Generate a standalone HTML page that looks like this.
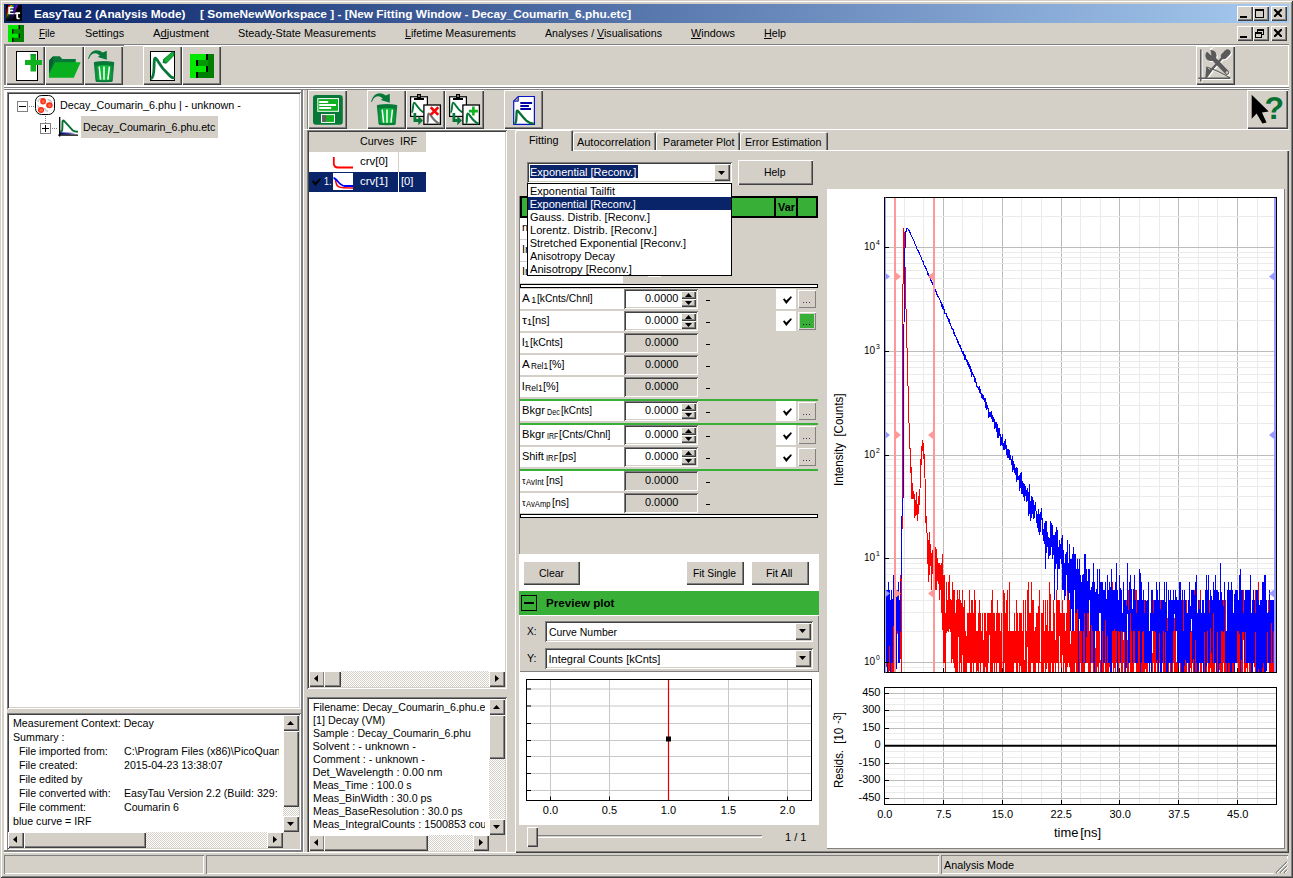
<!DOCTYPE html><html><head><meta charset="utf-8"><title>EasyTau 2</title><style>
*{box-sizing:border-box;margin:0;padding:0}
html,body{width:1293px;height:878px;overflow:hidden;background:#d4d0c8}
body{position:relative;font-family:"Liberation Sans",sans-serif;font-size:12px;color:#000}
div,span.t,svg{position:absolute}
span.t{white-space:pre;transform-origin:0 0;display:block}
.raised{background:#d4d0c8;box-shadow:inset 1px 1px 0 #fff,inset -1px -1px 0 #404040,inset -2px -2px 0 #808080}
.raised1{background:#d4d0c8;box-shadow:inset 1px 1px 0 #fff,inset -1px -1px 0 #808080}
.btn{background:#d4d0c8;box-shadow:inset 1px 1px 0 #fff,inset -1px -1px 0 #404040,inset -2px -2px 0 #808080,inset 2px 2px 0 #d4d0c8}
.sunken{background:#fff;box-shadow:inset 1px 1px 0 #808080,inset -1px -1px 0 #fff,inset 2px 2px 0 #404040,inset -2px -2px 0 #d4d0c8}
.sunken1{box-shadow:inset 1px 1px 0 #808080,inset -1px -1px 0 #fff}
.dither{background-image:conic-gradient(#fff 25%,#d4d0c8 0 50%,#fff 0 75%,#d4d0c8 0);background-size:2px 2px}
u{text-decoration:underline;text-underline-offset:1px;text-decoration-thickness:1px}
</style></head><body>
<div class="" style="left:0px;top:0px;width:1293px;height:878px;box-shadow:inset 1px 1px 0 #d4d0c8,inset -1px -1px 0 #404040,inset 2px 2px 0 #fff,inset -2px -2px 0 #808080;"></div>
<div class="" style="left:4px;top:4px;width:1285px;height:19px;background:linear-gradient(90deg,#0a246a 0%,#a6caf0 100%);"></div>
<svg style="left:6px;top:5px" width="16" height="16" viewBox="0 0 16 16"><defs><linearGradient id="tf" x1="0" y1="0" x2="0" y2="1"><stop offset="0" stop-color="#000" stop-opacity="0"/><stop offset=".55" stop-color="#000" stop-opacity=".35"/><stop offset="1" stop-color="#000" stop-opacity="1"/></linearGradient></defs><rect width="16" height="16" fill="#000"/><g transform="skewX(-22)"><rect x="2.500" y="0" width="2" height="16" fill="#c80000"/><rect x="4.500" y="0" width="1.800" height="16" fill="#c8b000"/><rect x="6.300" y="0" width="1.800" height="16" fill="#10a010"/><rect x="8.100" y="0" width="1.800" height="16" fill="#1020d0"/><rect x="9.900" y="0" width="2.200" height="16" fill="#7010c0"/></g><rect width="16" height="16" fill="url(#tf)"/><path d="M2.300 1.800h5.300v1.400H4v1.600h3.200v1.400H4v1.700h3.700v1.400H2.300z" fill="#fff"/><path d="M8.300 8.800C9 7.400 10 7.300 11 7.300h3.100v1.600h-2v3.400c0 .6.500.7 1.600.5v1.400c-2.300.5-3.400-.1-3.400-1.700V8.900c-.7 0-1.100.2-1.400.7z" fill="#fff"/></svg>
<span class="t" style="left:34.3px;top:8px;font-size:11.5px;line-height:13px;color:#fff;font-weight:bold;transform:scaleX(1.0281);">EasyTau 2 (Analysis Mode)</span>
<span class="t" style="left:200.3px;top:8px;font-size:11.5px;line-height:13px;color:#fff;font-weight:bold;transform:scaleX(1.0308);">[ SomeNewWorkspace ] - [New Fitting Window - Decay_Coumarin_6.phu.etc]</span>
<div class="raised" style="left:1237px;top:6px;width:16px;height:15px;"></div>
<div class="" style="left:1240px;top:16px;width:7px;height:2px;background:#000"></div>
<div class="raised" style="left:1253px;top:6px;width:16px;height:15px;"></div>
<div class="" style="left:1255px;top:9px;width:9px;height:9px;border:1px solid #000;border-top:2px solid #000"></div>
<div class="raised" style="left:1271px;top:6px;width:16px;height:15px;"></div>
<svg style="left:1274px;top:9px" width="8" height="8" viewBox="0 0 8 8"><path d="M.8.8L7.200 7.200M7.200.8L.8 7.200" stroke="#000" stroke-width="2" stroke-linecap="square"/></svg>
<div class="raised" style="left:1237px;top:26px;width:16px;height:15px;"></div>
<div class="" style="left:1240px;top:36px;width:7px;height:2px;background:#000"></div>
<div class="raised" style="left:1253px;top:26px;width:16px;height:15px;"></div>
<div class="" style="left:1257px;top:29px;width:7px;height:6px;border:1px solid #000;border-top:2px solid #000"></div>
<div class="" style="left:1255px;top:32px;width:7px;height:6px;border:1px solid #000;border-top:2px solid #000;background:#d4d0c8"></div>
<div class="raised" style="left:1271px;top:26px;width:16px;height:15px;"></div>
<svg style="left:1274px;top:29px" width="8" height="8" viewBox="0 0 8 8"><path d="M.8.8L7.200 7.200M7.200.8L.8 7.200" stroke="#000" stroke-width="2" stroke-linecap="square"/></svg>
<svg style="left:8px;top:25px" width="16" height="17" viewBox="0 0 16 17"><rect x="0.00" y="0.00" width="16.00" height="17.00" fill="#008000"/><rect x="0.00" y="0.00" width="4.00" height="17.00" fill="#00e800"/><rect x="4.00" y="0.00" width="6.67" height="4.25" fill="#00e800"/><rect x="4.00" y="8.50" width="6.67" height="4.25" fill="#00e800"/><rect x="5.33" y="4.25" width="6.67" height="4.25" fill="#009800"/><rect x="10.67" y="0.00" width="1.33" height="4.25" fill="#000"/><rect x="4.00" y="4.25" width="1.33" height="4.25" fill="#000"/><rect x="10.67" y="8.50" width="1.33" height="4.25" fill="#000"/><rect x="4.00" y="12.75" width="1.33" height="4.25" fill="#000"/></svg>
<span class="t" style="left:38.5px;top:27px;font-size:11px;line-height:13px;color:#000;transform:scaleX(0.9030);"><u>F</u>ile</span>
<span class="t" style="left:84.5px;top:27px;font-size:11px;line-height:13px;color:#000;transform:scaleX(0.9854);">Settin<u>g</u>s</span>
<span class="t" style="left:153px;top:27px;font-size:11px;line-height:13px;color:#000;transform:scaleX(1.0170);">A<u>d</u>justment</span>
<span class="t" style="left:238px;top:27px;font-size:11px;line-height:13px;color:#000;transform:scaleX(0.9892);">Stead<u>y</u>-State Measurements</span>
<span class="t" style="left:405px;top:27px;font-size:11px;line-height:13px;color:#000;transform:scaleX(0.9705);"><u>L</u>ifetime Measurements</span>
<span class="t" style="left:545px;top:27px;font-size:11px;line-height:13px;color:#000;transform:scaleX(0.9676);">Analyses / <u>V</u>isualisations</span>
<span class="t" style="left:691px;top:27px;font-size:11px;line-height:13px;color:#000;transform:scaleX(0.9860);"><u>W</u>indows</span>
<span class="t" style="left:764px;top:27px;font-size:11px;line-height:13px;color:#000;transform:scaleX(0.9724);"><u>H</u>elp</span>
<div class="" style="left:4px;top:44px;width:1285px;height:1px;background:#808080"></div>
<div class="" style="left:4px;top:45px;width:1285px;height:1px;background:#fff"></div>
<div class="" style="left:4px;top:45px;width:120px;height:1px;background:#808080"></div>
<div class="" style="left:4px;top:44px;width:1px;height:42px;background:#808080"></div>
<div class="" style="left:5px;top:45px;width:1px;height:40px;background:#808080"></div>
<div class="" style="left:4px;top:85px;width:1285px;height:2px;background:#fff"></div>
<div class="" style="left:4px;top:87px;width:1285px;height:1px;background:#808080"></div>
<div class="" style="left:4px;top:88px;width:1285px;height:1px;background:#fff"></div>
<div class="" style="left:4px;top:89px;width:1285px;height:1px;background:#808080"></div>
<div class="" style="left:1288px;top:45px;width:1px;height:42px;background:#fff"></div>
<div class="btn" style="left:6px;top:46px;width:39px;height:39px;"></div>
<div class="btn" style="left:45px;top:46px;width:39px;height:39px;"></div>
<div class="btn" style="left:84px;top:46px;width:39px;height:39px;"></div>
<div class="btn" style="left:143px;top:46px;width:39px;height:39px;"></div>
<div class="btn" style="left:182px;top:46px;width:39px;height:39px;"></div>
<div class="btn" style="left:1196px;top:46px;width:39px;height:39px;"></div>
<svg style="left:6px;top:46px" width="39" height="39" viewBox="0 0 39 39"><rect x="10.5" y="5.5" width="21" height="29" fill="#fff" stroke="#000"/><path d="M24.5 8h5.5v6h6v5h-6v6.500h-5.500v-6.500h-5.500v-5h5.500z" fill="#10b020"/><path d="M24.500 8h5.500v1.500h-5.500z" fill="#078030" opacity=".6"/></svg>
<svg style="left:45px;top:46px" width="39" height="39" viewBox="0 0 39 39"><path d="M4 14.400L8.200 10.300H14.800L17.300 13H30.800V17H10.500L4 29z" fill="#087838"/><path d="M4 14.400L8.200 10.300 8.200 16 4 28z" fill="#066030"/><path d="M10 16.200H35.700L28.800 31.800H4V28z" fill="#08b020"/></svg>
<svg style="left:84px;top:46px" width="39" height="39" viewBox="0 0 39 39"><g transform="translate(0,0)"><defs><linearGradient id="tg00" x1="0" y1="0" x2="1" y2="0"><stop offset="0" stop-color="#087838"/><stop offset=".3" stop-color="#10b838"/><stop offset=".7" stop-color="#10b838"/><stop offset="1" stop-color="#087838"/></linearGradient></defs><path d="M10.300 16.500Q20 14.800 29.800 16.500L28.200 35.300Q20 36.300 12 35.300z" fill="url(#tg00)" stroke="#087838" stroke-width=".8"/><path d="M10.300 16Q20 14.500 29.800 16L29.500 19.800Q20 18.300 10.700 19.800z" fill="#087838"/><path d="M12.200 33.800Q20 34.800 28 33.800L27.900 35.500Q20 36.500 12.200 35.500z" fill="#087838"/><path d="M15.200 20.600l1.400 13M20 20.400v13.400M25.400 20.600l-1.500 13" stroke="#fff" stroke-width="1.500" fill="none"/><path d="M4 12.500Q6.500 4.500 12 4.200Q16 4.200 18.800 6.600L22.800 4.700V13.700L13.800 11L15.800 9.600Q12.500 6.500 9.500 7.500Q6.500 8.500 4.900 12.900z" fill="#087838"/></g></svg>
<svg style="left:143px;top:46px" width="39" height="39" viewBox="0 0 39 39"><rect x="7.500" y="5.500" width="24" height="29" fill="#fff" stroke="#000"/><path d="M8.500 32.300C10.500 31 10.800 27 11 22C11.200 13 11.500 12 12.500 12.200C13.500 12.400 17 19 20 22.600L27 30C28.500 31.500 29.500 31.900 30.500 31.900" stroke="#087838" stroke-width="2.800" fill="none" stroke-linecap="round"/><path d="M20 16.600L20.800 13.200 29.300 6H31V9.300L23.300 17.200z" fill="#10b030" stroke="#087838" stroke-width=".9"/><path d="M20 16.600L20.800 13.200 23.300 17.200z" fill="#087838"/></svg>
<svg style="left:182px;top:46px" width="39" height="39" viewBox="0 0 39 39"><rect x="8.00" y="8.00" width="24.00" height="24.00" fill="#008000"/><rect x="8.00" y="8.00" width="6.00" height="24.00" fill="#00e800"/><rect x="14.00" y="8.00" width="10.00" height="6.00" fill="#00e800"/><rect x="14.00" y="20.00" width="10.00" height="6.00" fill="#00e800"/><rect x="16.00" y="14.00" width="10.00" height="6.00" fill="#009800"/><rect x="24.00" y="8.00" width="2.00" height="6.00" fill="#000"/><rect x="14.00" y="14.00" width="2.00" height="6.00" fill="#000"/><rect x="24.00" y="20.00" width="2.00" height="6.00" fill="#000"/><rect x="14.00" y="26.00" width="2.00" height="6.00" fill="#000"/></svg>
<svg style="left:1196px;top:46px" width="39" height="39" viewBox="0 0 39 39"><g transform="translate(1,1)"><path d="M4.800 3.500v32M2.400 32.300h32" stroke="#fff" stroke-width="1.500" fill="none"/><path d="M9.300 32L10.300 21l5.500 4.300L11 32z" fill="#fff"/><path d="M10.300 21Q22 24.500 34 32" stroke="#fff" stroke-width="1.200" fill="none"/><path d="M31.500 6.500L28 10" stroke="#fff" stroke-width="6.200" stroke-linecap="round"/><path d="M28 10L12.500 27" stroke="#fff" stroke-width="2.300"/><path d="M16 11L31 26.500" stroke="#fff" stroke-width="4.600" stroke-linecap="round"/><circle cx="15" cy="9.500" r="5.600" fill="#fff"/><path d="M8 2.500L15.500 9.500 12.500 2z" fill="#fff"/><path d="M9 1l6.500 6.500L13.800 3 17 .5z" fill="#fff"/><path d="M15.500 9.800L8.500 3.200 13 1.500z" fill="#fff"/><circle cx="31" cy="26.500" r="1.300" fill="#fff"/></g><path d="M4.800 3.500v32M2.400 32.300h32" stroke="#5a5a5a" stroke-width="1.500" fill="none"/><path d="M9.300 32L10.300 21l5.500 4.300L11 32z" fill="#5a5a5a"/><path d="M10.300 21Q22 24.500 34 32" stroke="#5a5a5a" stroke-width="1.200" fill="none"/><path d="M31.500 6.500L28 10" stroke="#5a5a5a" stroke-width="6.200" stroke-linecap="round"/><path d="M28 10L12.500 27" stroke="#5a5a5a" stroke-width="2.300"/><path d="M16 11L31 26.500" stroke="#5a5a5a" stroke-width="4.600" stroke-linecap="round"/><circle cx="15" cy="9.500" r="5.600" fill="#5a5a5a"/><path d="M8 2.500L15.500 9.500 12.500 2z" fill="#d4d0c8"/><path d="M9 1l6.500 6.500L13.800 3 17 .5z" fill="#d4d0c8"/><path d="M15.500 9.800L8.500 3.200 13 1.500z" fill="#d4d0c8"/><circle cx="31" cy="26.500" r="1.300" fill="#d4d0c8"/></svg>
<div class="" style="left:4px;top:90px;width:299px;height:2px;background:#fff"></div>
<div class="" style="left:4px;top:90px;width:3px;height:760px;background:#fff"></div>
<div class="sunken" style="left:7px;top:92px;width:294px;height:617px;"></div>
<div class="" style="left:29px;top:106px;width:1px;height:1px;background:#808080"></div>
<div class="" style="left:31px;top:106px;width:1px;height:1px;background:#808080"></div>
<div class="" style="left:33px;top:106px;width:1px;height:1px;background:#808080"></div>
<div class="" style="left:45px;top:116px;width:1px;height:1px;background:#808080"></div>
<div class="" style="left:45px;top:118px;width:1px;height:1px;background:#808080"></div>
<div class="" style="left:45px;top:120px;width:1px;height:1px;background:#808080"></div>
<div class="" style="left:45px;top:122px;width:1px;height:1px;background:#808080"></div>
<div class="" style="left:52px;top:128px;width:1px;height:1px;background:#808080"></div>
<div class="" style="left:54px;top:128px;width:1px;height:1px;background:#808080"></div>
<div class="" style="left:56px;top:128px;width:1px;height:1px;background:#808080"></div>
<div class="" style="left:17px;top:101px;width:11px;height:11px;border:1px solid #808080;background:#fff"></div>
<div class="" style="left:19px;top:106px;width:7px;height:1px;background:#000"></div>
<div class="" style="left:40px;top:123px;width:11px;height:11px;border:1px solid #808080;background:#fff"></div>
<div class="" style="left:42px;top:128px;width:7px;height:1px;background:#000"></div>
<div class="" style="left:45px;top:125px;width:1px;height:7px;background:#000"></div>
<svg style="left:35px;top:95px" width="20" height="20" viewBox="0 0 20 20"><rect x=".5" y=".5" width="19" height="19" rx="6" fill="#fff" stroke="#000"/><path d="M3 7Q3.500 3.500 7 3.200M12.500 4.500Q16 5 16.500 8M2.800 10.500Q3 12 4.500 12.500M9.500 13Q10.500 16 13 16.500" stroke="#c8c8c8" stroke-width="1.600" fill="none"/><ellipse cx="8.100" cy="6.300" rx="2.900" ry="3.200" fill="#f83018"/><ellipse cx="14.400" cy="10.300" rx="3.300" ry="3" fill="#f83018"/><ellipse cx="6" cy="15" rx="3.100" ry="2.900" fill="#f83018"/><ellipse cx="8.300" cy="6.600" rx="1.500" ry="1.700" fill="#ff6848"/><ellipse cx="14.600" cy="10.500" rx="1.700" ry="1.500" fill="#ff6848"/><ellipse cx="6.200" cy="15.200" rx="1.600" ry="1.400" fill="#ff6848"/></svg>
<span class="t" style="left:60px;top:99px;font-size:11px;line-height:13px;color:#000;transform:scaleX(0.9775);">Decay_Coumarin_6.phu | - unknown -</span>
<div class="" style="left:173px;top:98px;width:1px;height:13px;background:#e08000;opacity:0"></div>
<svg style="left:58px;top:116px" width="21" height="21" viewBox="0 0 21 21"><defs><linearGradient id="cg" x1="0" y1="0" x2="1" y2="0"><stop offset="0" stop-color="#000080"/><stop offset=".5" stop-color="#4040a0"/><stop offset="1" stop-color="#fff"/></linearGradient></defs><path d="M2 18.700V16.200L15 16.800 19.500 18.700z" fill="url(#cg)"/><path d="M2.300 15.800C4.500 15.600 4.300 15 4.500 6C4.600 4 5.500 4.200 6.500 5.300L14.500 14.200C16 15.600 17.500 15.700 20 15.700" stroke="#087030" stroke-width="1.900" fill="none"/><path d="M1.700 1v19.500M.2 19.200h19.800" stroke="#000" stroke-width="1.300" fill="none"/></svg>
<div class="" style="left:81px;top:116px;width:137px;height:22px;background:#d4d0c8"></div>
<span class="t" style="left:82.9px;top:121px;font-size:11px;line-height:13px;color:#000;transform:scaleX(0.9711);">Decay_Coumarin_6.phu.etc</span>
<div class="" style="left:7px;top:709px;width:294px;height:4px;background:#d4d0c8"></div>
<div class="sunken" style="left:7px;top:713px;width:294px;height:137px;"></div>
<div class="" style="left:4px;top:850px;width:299px;height:2px;background:#808080"></div>
<div class="" style="left:8px;top:715px;width:275px;height:117px;overflow:hidden"></div>
<span class="t" style="left:12.9px;top:716.5px;font-size:11px;line-height:13px;color:#000;transform:scaleX(0.9680);">Measurement Context: Decay</span>
<span class="t" style="left:12.9px;top:730.5px;font-size:11px;line-height:13px;color:#000;transform:scaleX(0.9680);">Summary :</span>
<span class="t" style="left:18.599999999999998px;top:744.5px;font-size:11px;line-height:13px;color:#000;transform:scaleX(0.9680);">File imported from:</span>
<span class="t" style="left:124.2px;top:744.5px;font-size:11px;line-height:13px;color:#000;transform:scaleX(0.9660);">C:\Program Files (x86)\PicoQuan</span>
<span class="t" style="left:18.599999999999998px;top:758.5px;font-size:11px;line-height:13px;color:#000;transform:scaleX(0.9680);">File created:</span>
<span class="t" style="left:124.2px;top:758.5px;font-size:11px;line-height:13px;color:#000;transform:scaleX(0.9660);">2015-04-23 13:38:07</span>
<span class="t" style="left:18.599999999999998px;top:772.5px;font-size:11px;line-height:13px;color:#000;transform:scaleX(0.9680);">File edited by</span>
<span class="t" style="left:18.599999999999998px;top:786.5px;font-size:11px;line-height:13px;color:#000;transform:scaleX(0.9680);">File converted with:</span>
<span class="t" style="left:124.2px;top:786.5px;font-size:11px;line-height:13px;color:#000;transform:scaleX(0.9660);">EasyTau Version 2.2 (Build: 329:</span>
<span class="t" style="left:18.599999999999998px;top:800.5px;font-size:11px;line-height:13px;color:#000;transform:scaleX(0.9680);">File comment:</span>
<span class="t" style="left:124.2px;top:800.5px;font-size:11px;line-height:13px;color:#000;transform:scaleX(0.9660);">Coumarin 6</span>
<span class="t" style="left:12.9px;top:814.5px;font-size:11px;line-height:13px;color:#000;transform:scaleX(0.9680);">blue curve = IRF</span>
<div class="" style="left:279px;top:715px;width:4px;height:117px;background:#fff"></div>
<div class="dither" style="left:283px;top:715px;width:16px;height:117px;"></div>
<div class="raised" style="left:283px;top:715px;width:16px;height:16px;"></div>
<svg style="left:287px;top:721px" width="7" height="4" viewBox="0 0 7 4"><path d="M0 4h7L3.500 0z" fill="#000"/></svg>
<div class="raised" style="left:283px;top:816px;width:16px;height:16px;"></div>
<svg style="left:287px;top:822px" width="7" height="4" viewBox="0 0 7 4"><path d="M0 0h7L3.500 4z" fill="#000"/></svg>
<div class="raised" style="left:283px;top:731px;width:16px;height:76px;"></div>
<div class="dither" style="left:8px;top:832px;width:275px;height:16px;"></div>
<div class="raised" style="left:8px;top:832px;width:16px;height:16px;"></div>
<svg style="left:13px;top:836px" width="4" height="7" viewBox="0 0 4 7"><path d="M4 0v7L0 3.500z" fill="#000"/></svg>
<div class="raised" style="left:267px;top:832px;width:16px;height:16px;"></div>
<svg style="left:273px;top:836px" width="4" height="7" viewBox="0 0 4 7"><path d="M0 0v7l4-3.500z" fill="#000"/></svg>
<div class="raised" style="left:24px;top:832px;width:122px;height:16px;"></div>
<div class="" style="left:283px;top:832px;width:16px;height:16px;background:#d4d0c8"></div>
<div class="" style="left:301px;top:90px;width:2px;height:762px;background:#808080"></div>
<div class="" style="left:303px;top:90px;width:1px;height:762px;background:#fff"></div>
<div class="" style="left:307px;top:90px;width:1px;height:39px;background:#808080"></div>
<div class="" style="left:303px;top:129px;width:986px;height:1px;background:#fff"></div>
<div class="btn" style="left:308px;top:90px;width:39px;height:39px;"></div>
<div class="btn" style="left:367px;top:90px;width:39px;height:39px;"></div>
<div class="btn" style="left:406px;top:90px;width:39px;height:39px;"></div>
<div class="btn" style="left:445px;top:90px;width:39px;height:39px;"></div>
<div class="btn" style="left:504px;top:90px;width:39px;height:39px;"></div>
<svg style="left:308px;top:90px" width="39" height="39" viewBox="0 0 39 39"><rect x="5" y="5" width="29.800" height="29.800" rx="3" fill="#087838"/><rect x="9.800" y="8.600" width="20.700" height="12.700" fill="#10b020" stroke="#fff" stroke-width="1"/><path d="M11.200 12h9M11.200 15h16.800M11.200 18h12" stroke="#fff" stroke-width="1.900"/><rect x="13.500" y="24.600" width="13" height="7.800" fill="#10b020" stroke="#fff" stroke-width="1"/><rect x="14" y="25.100" width="4" height="6.800" fill="#606060"/></svg>
<svg style="left:367px;top:90px" width="39" height="39" viewBox="0 0 39 39"><g transform="translate(0,-1)"><defs><linearGradient id="tg0-1" x1="0" y1="0" x2="1" y2="0"><stop offset="0" stop-color="#087838"/><stop offset=".3" stop-color="#10b838"/><stop offset=".7" stop-color="#10b838"/><stop offset="1" stop-color="#087838"/></linearGradient></defs><path d="M10.300 16.500Q20 14.800 29.800 16.500L28.200 35.300Q20 36.300 12 35.300z" fill="url(#tg0-1)" stroke="#087838" stroke-width=".8"/><path d="M10.300 16Q20 14.500 29.800 16L29.500 19.800Q20 18.300 10.700 19.800z" fill="#087838"/><path d="M12.200 33.800Q20 34.800 28 33.800L27.900 35.500Q20 36.500 12.200 35.500z" fill="#087838"/><path d="M15.200 20.600l1.400 13M20 20.400v13.400M25.400 20.600l-1.500 13" stroke="#fff" stroke-width="1.500" fill="none"/><path d="M4 12.500Q6.500 4.500 12 4.200Q16 4.200 18.800 6.600L22.800 4.700V13.700L13.800 11L15.800 9.600Q12.500 6.500 9.500 7.500Q6.500 8.500 4.900 12.900z" fill="#087838"/></g></svg>
<svg style="left:406px;top:90px" width="39" height="39" viewBox="0 0 39 39"><rect x="4.600" y="6.800" width="16.800" height="19.600" fill="#fff" stroke="#000" stroke-width="1.200"/><rect x="8" y="8" width="10" height="2" fill="#000"/><rect x="11" y="4" width="4" height="4" fill="#000"/><rect x="12.300" y="5.200" width="1.400" height="1.600" fill="#d4d0c8"/><path d="M5.500 22.500C7.500 22 6.500 12.800 8.300 12.800C9.800 12.800 12 19.500 17.500 22.500" stroke="#087838" stroke-width="1.900" fill="none"/><path d="M7.500 23h2.700v6h2.100v-3l4.700 4.600-4.700 4.600v-3.200H7.500z" fill="#087838"/><rect x="17.900" y="15" width="16.500" height="19.300" fill="#fff" stroke="#000" stroke-width="1.300"/><path d="M20.800 33.300C22.800 33 21 23.500 22.800 23.500C24.500 23.500 27 31 33.500 33.700" stroke="#707070" stroke-width="2.200" fill="none"/><path d="M24.700 17.300l7.600 7.600M32.300 17.300l-7.600 7.600" stroke="#f80808" stroke-width="2.700"/></svg>
<svg style="left:445px;top:90px" width="39" height="39" viewBox="0 0 39 39"><rect x="4.600" y="6.800" width="16.800" height="19.600" fill="#fff" stroke="#000" stroke-width="1.200"/><rect x="8" y="8" width="10" height="2" fill="#000"/><rect x="11" y="4" width="4" height="4" fill="#000"/><rect x="12.300" y="5.200" width="1.400" height="1.600" fill="#d4d0c8"/><path d="M5.500 22.500C7.500 22 6.500 12.800 8.300 12.800C9.800 12.800 12 19.500 17.500 22.500" stroke="#087838" stroke-width="1.900" fill="none"/><path d="M7.500 23h2.700v6h2.100v-3l4.700 4.600-4.700 4.600v-3.200H7.500z" fill="#087838"/><rect x="17.900" y="15" width="16.500" height="19.300" fill="#fff" stroke="#000" stroke-width="1.300"/><path d="M20.800 33.300C22.800 33 21 23.500 22.800 23.500C24.500 23.500 27 31 33.500 33.700" stroke="#087838" stroke-width="2.200" fill="none"/><path d="M28.400 16.600v9M23.900 21.100h9" stroke="#10b020" stroke-width="2.600"/></svg>
<svg style="left:504px;top:90px" width="39" height="39" viewBox="0 0 39 39"><path d="M9.700 11.200L14.300 6.500H30.400V34.300H9.700z" fill="#fff" stroke="#0818c0" stroke-width="1.200"/><path d="M9.700 11.200h4.600V6.500z" fill="#b0a898" stroke="#0818c0" stroke-width="1"/><path d="M16.300 13h11.800M16.300 16h8.600M16.300 19.100h10.700" stroke="#0000a8" stroke-width="2"/><path d="M10.500 33.600C12.300 33.200 12.300 30 12.500 25C12.600 21 12.800 20.500 13.400 20.700C14.500 21 18 26.500 22.300 30.600C25 33 27.500 33.600 29.800 33.600" stroke="#087030" stroke-width="2.300" fill="none"/></svg>
<div class="btn" style="left:1247px;top:90px;width:41px;height:39px;"></div>
<svg style="left:1247px;top:90px" width="41" height="39" viewBox="0 0 41 39"><path d="M4.700 4.700V28.800L9.600 23.600 15.400 33.500 19.600 32.500 14.900 22.500 21.700 21.500z" fill="#000"/><text x="17.500" y="29.300" font-family="Liberation Sans" font-weight="bold" font-size="32" fill="#087030">?</text></svg>
<div class="sunken" style="left:307px;top:130px;width:200px;height:559px;"></div>
<div class="" style="left:309px;top:132px;width:117px;height:20px;background:#d4d0c8"></div>
<span class="t" style="left:359.5px;top:135px;font-size:11px;line-height:13px;color:#000;transform:scaleX(0.9758);">Curves</span>
<span class="t" style="left:399.5px;top:135px;font-size:11px;line-height:13px;color:#000;transform:scaleX(0.9594);">IRF</span>
<div class="" style="left:398px;top:152px;width:1px;height:40px;background:#d4d0c8"></div>
<svg style="left:332px;top:156px" width="22" height="14" viewBox="0 0 22 14"><path d="M1.800 1V8Q2.300 11.500 6 11.500H21" stroke="#f00" stroke-width="1.800" fill="none"/></svg>
<span class="t" style="left:359.5px;top:155px;font-size:11px;line-height:13px;color:#000;transform:scaleX(1.0407);">crv[0]</span>
<div class="" style="left:309px;top:172px;width:117px;height:20px;background:#0a246a"></div>
<div class="" style="left:398px;top:172px;width:1px;height:20px;background:#fff"></div>
<svg style="left:312px;top:178px" width="9" height="8" viewBox="0 0 9 8"><path d="M0 3.500l1.300-1.300 2 2.300L8 0l.8 1.500L3.300 8z" fill="#000"/></svg>
<span class="t" style="left:324px;top:175px;font-size:11px;line-height:13px;color:#fff;transform:scaleX(0.8163);">1.</span>
<div class="" style="left:333px;top:173px;width:20px;height:17px;background:#fff"></div>
<svg style="left:333px;top:173px" width="20" height="17" viewBox="0 0 20 17"><path d="M2.500 6C3 15 5 15 20 15" stroke="#f00" stroke-width="1.600" fill="none"/><path d="M.5 5C4 5 6 13 12 13H20" stroke="#00f" stroke-width="1.800" fill="none"/></svg>
<span class="t" style="left:359.5px;top:175px;font-size:11px;line-height:13px;color:#fff;transform:scaleX(1.0407);">crv[1]</span>
<span class="t" style="left:400.5px;top:175px;font-size:11px;line-height:13px;color:#fff;transform:scaleX(1.0204);">[0]</span>
<div class="dither" style="left:309px;top:671px;width:196px;height:16px;"></div>
<div class="raised" style="left:309px;top:671px;width:16px;height:16px;"></div>
<svg style="left:314px;top:675px" width="4" height="7" viewBox="0 0 4 7"><path d="M4 0v7L0 3.500z" fill="#000"/></svg>
<div class="raised" style="left:489px;top:671px;width:16px;height:16px;"></div>
<svg style="left:495px;top:675px" width="4" height="7" viewBox="0 0 4 7"><path d="M0 0v7l4-3.500z" fill="#000"/></svg>
<div class="raised" style="left:324px;top:671px;width:17px;height:16px;"></div>
<div class="sunken" style="left:307px;top:697px;width:200px;height:156px;"></div>
<div style="left:309px;top:699px;width:176px;height:136px;overflow:hidden">
<span class="t" style="left:3.5px;top:1.6999999999999993px;font-size:11px;line-height:13px;color:#000;transform:scaleX(0.9617);">Filename: Decay_Coumarin_6.phu.etc</span>
<span class="t" style="left:3.5px;top:14.7px;font-size:11px;line-height:13px;color:#000;transform:scaleX(0.9813);">[1] Decay (VM)</span>
<span class="t" style="left:3.5px;top:27.700000000000003px;font-size:11px;line-height:13px;color:#000;transform:scaleX(0.9565);">Sample : Decay_Coumarin_6.phu</span>
<span class="t" style="left:3.5px;top:40.7px;font-size:11px;line-height:13px;color:#000;">Solvent : - unknown -</span>
<span class="t" style="left:3.5px;top:53.7px;font-size:11px;line-height:13px;color:#000;transform:scaleX(0.9792);">Comment : - unknown -</span>
<span class="t" style="left:3.5px;top:66.7px;font-size:11px;line-height:13px;color:#000;">Det_Wavelength : 0.00 nm</span>
<span class="t" style="left:3.5px;top:79.7px;font-size:11px;line-height:13px;color:#000;transform:scaleX(0.9631);">Meas_Time : 100.0 s</span>
<span class="t" style="left:3.5px;top:92.7px;font-size:11px;line-height:13px;color:#000;transform:scaleX(0.9724);">Meas_BinWidth : 30.0 ps</span>
<span class="t" style="left:3.5px;top:105.7px;font-size:11px;line-height:13px;color:#000;transform:scaleX(0.9624);">Meas_BaseResolution : 30.0 ps</span>
<span class="t" style="left:3.5px;top:118.69999999999999px;font-size:11px;line-height:13px;color:#000;transform:scaleX(0.9774);">Meas_IntegralCounts : 1500853 counts</span>
</div>
<div class="dither" style="left:489px;top:699px;width:16px;height:136px;"></div>
<div class="raised" style="left:489px;top:699px;width:16px;height:16px;"></div>
<svg style="left:493px;top:705px" width="7" height="4" viewBox="0 0 7 4"><path d="M0 4h7L3.500 0z" fill="#000"/></svg>
<div class="raised" style="left:489px;top:819px;width:16px;height:16px;"></div>
<svg style="left:493px;top:825px" width="7" height="4" viewBox="0 0 7 4"><path d="M0 0h7L3.500 4z" fill="#000"/></svg>
<div class="raised" style="left:489px;top:715px;width:16px;height:44px;"></div>
<div class="dither" style="left:309px;top:835px;width:180px;height:16px;"></div>
<div class="raised" style="left:309px;top:835px;width:16px;height:16px;"></div>
<svg style="left:314px;top:839px" width="4" height="7" viewBox="0 0 4 7"><path d="M4 0v7L0 3.500z" fill="#000"/></svg>
<div class="raised" style="left:473px;top:835px;width:16px;height:16px;"></div>
<svg style="left:479px;top:839px" width="4" height="7" viewBox="0 0 4 7"><path d="M0 0v7l4-3.500z" fill="#000"/></svg>
<div class="raised" style="left:324px;top:835px;width:104px;height:16px;"></div>
<div class="" style="left:489px;top:835px;width:16px;height:16px;background:#d4d0c8"></div>
<div class="" style="left:515px;top:150px;width:774px;height:703px;box-shadow:inset 1px 1px 0 #fff,inset -1px -1px 0 #404040,inset -2px -2px 0 #808080;"></div>
<div class="" style="left:573px;top:132px;width:83px;height:18px;background:#d4d0c8;box-shadow:inset 1px 1px 0 #fff,inset -1px 0 0 #404040,inset -2px 0 0 #808080;border-radius:2px 2px 0 0"></div>
<span class="t" style="left:577px;top:136px;font-size:11px;line-height:13px;color:#000;transform:scaleX(0.9928);">Autocorrelation</span>
<div class="" style="left:656px;top:132px;width:84px;height:18px;background:#d4d0c8;box-shadow:inset 1px 1px 0 #fff,inset -1px 0 0 #404040,inset -2px 0 0 #808080;border-radius:2px 2px 0 0"></div>
<span class="t" style="left:662.5px;top:136px;font-size:11px;line-height:13px;color:#000;transform:scaleX(0.9740);">Parameter Plot</span>
<div class="" style="left:740px;top:132px;width:88px;height:18px;background:#d4d0c8;box-shadow:inset 1px 1px 0 #fff,inset -1px 0 0 #404040,inset -2px 0 0 #808080;border-radius:2px 2px 0 0"></div>
<span class="t" style="left:745px;top:136px;font-size:11px;line-height:13px;color:#000;transform:scaleX(0.9699);">Error Estimation</span>
<div class="" style="left:515px;top:130px;width:58px;height:21px;background:#d4d0c8;box-shadow:inset 1px 1px 0 #fff,inset -1px 0 0 #404040,inset -2px 0 0 #808080;border-radius:2px 2px 0 0"></div>
<span class="t" style="left:528.5px;top:134px;font-size:11px;line-height:13px;color:#000;transform:scaleX(0.9844);">Fitting</span>
<div class="sunken" style="left:527px;top:162px;width:205px;height:21px;"></div>
<div class="" style="left:530px;top:165px;width:108px;height:13px;background:#0a246a"></div>
<span class="t" style="left:530px;top:165.5px;font-size:11px;line-height:13px;color:#fff;">Exponential [Reconv.]</span>
<div class="raised" style="left:714px;top:164px;width:16px;height:17px;"></div>
<svg style="left:718px;top:171px" width="7" height="4" viewBox="0 0 7 4"><path d="M0 0h7L3.500 4z" fill="#000"/></svg>
<div class="btn" style="left:738px;top:160px;width:75px;height:25px;"></div>
<span class="t" style="left:763.8px;top:166px;font-size:11px;line-height:13px;color:#000;transform:scaleX(0.9503);">Help</span>
<div class="" style="left:520px;top:196px;width:298px;height:22px;background:#38b038;border:2px solid #000"></div>
<div class="" style="left:774px;top:196px;width:2px;height:22px;background:#000"></div>
<div class="" style="left:796px;top:196px;width:2px;height:22px;background:#000"></div>
<span class="t" style="left:777.5px;top:201px;font-size:11px;line-height:13px;color:#000;font-weight:bold;transform:scaleX(0.9918);">Var</span>
<div class="" style="left:520px;top:218px;width:298px;height:66px;background:#d4d0c8"></div>
<div class="" style="left:520px;top:218px;width:103px;height:21px;background:#fff"></div>
<div class="" style="left:520px;top:240px;width:103px;height:21px;background:#fff"></div>
<div class="" style="left:520px;top:262px;width:103px;height:21px;background:#fff"></div>
<span class="t" style="left:522px;top:221px;font-size:11px;line-height:13px;color:#000;">n</span>
<span class="t" style="left:522px;top:243px;font-size:11px;line-height:13px;color:#000;">In</span>
<span class="t" style="left:522px;top:265px;font-size:11px;line-height:13px;color:#000;">In</span>
<div class="" style="left:648px;top:275px;width:13px;height:2px;background:#fff"></div>
<div class="" style="left:520px;top:284px;width:298px;height:4px;background:#fff;border:1px solid #000"></div>
<div class="" style="left:527px;top:183px;width:205px;height:93px;background:#fff;border:1px solid #000"></div>
<div class="" style="left:528px;top:197px;width:203px;height:13px;background:#0a246a"></div>
<span class="t" style="left:529.7px;top:184.5px;font-size:11px;line-height:13px;color:#000;transform:scaleX(0.9947);">Exponential Tailfit</span>
<span class="t" style="left:529.7px;top:197.5px;font-size:11px;line-height:13px;color:#fff;">Exponential [Reconv.]</span>
<span class="t" style="left:529.7px;top:210.5px;font-size:11px;line-height:13px;color:#000;transform:scaleX(0.9925);">Gauss. Distrib. [Reconv.]</span>
<span class="t" style="left:529.7px;top:223.5px;font-size:11px;line-height:13px;color:#000;transform:scaleX(1.0094);">Lorentz. Distrib. [Reconv.]</span>
<span class="t" style="left:529.7px;top:236.5px;font-size:11px;line-height:13px;color:#000;">Stretched Exponential [Reconv.]</span>
<span class="t" style="left:529.7px;top:249.5px;font-size:11px;line-height:13px;color:#000;transform:scaleX(0.9855);">Anisotropy Decay</span>
<span class="t" style="left:529.7px;top:262.5px;font-size:11px;line-height:13px;color:#000;transform:scaleX(1.0124);">Anisotropy [Reconv.]</span>
<div class="" style="left:520px;top:288px;width:298px;height:226px;background:#d4d0c8"></div>
<div class="" style="left:519px;top:196px;width:1px;height:358px;background:#808080"></div>
<div class="" style="left:520px;top:288.5px;width:103.5px;height:20.5px;background:#fff"></div>
<span class="t" style="left:522.2px;top:292.3px;font-size:11px;line-height:13px;color:#000;transform:scaleX(1.0621);">A</span>
<span class="t" style="left:531.3px;top:295.3px;font-size:9px;line-height:10px;color:#000;">1</span>
<span class="t" style="left:536.5px;top:292.3px;font-size:11px;line-height:13px;color:#000;transform:scaleX(0.9293);">[kCnts/Chnl]</span>
<div class="sunken" style="left:624px;top:289px;width:74px;height:20px;"></div>
<div class="raised" style="left:681px;top:291px;width:15px;height:8px;"></div>
<svg style="left:685px;top:293px" width="7" height="4" viewBox="0 0 7 4"><path d="M0 4h7L3.500 0z" fill="#000"/></svg>
<div class="raised" style="left:681px;top:299px;width:15px;height:8px;"></div>
<svg style="left:685px;top:301px" width="7" height="4" viewBox="0 0 7 4"><path d="M0 0h7L3.500 4z" fill="#000"/></svg>
<span class="t" style="left:644.7px;top:292.3px;font-size:11px;line-height:13px;color:#000;transform:scaleX(0.9944);">0.0000</span>
<div class="" style="left:706px;top:300px;width:4px;height:1px;background:#000"></div>
<div class="" style="left:776px;top:289px;width:20px;height:20px;background:#fff"></div>
<svg style="left:783px;top:296px" width="9" height="8" viewBox="0 0 9 8"><path d="M0 3.500l1.300-1.300 2 2.300L8 0l.8 1.500L3.300 8z" fill="#000"/></svg>
<div class="raised1" style="left:798px;top:290px;width:18px;height:18px;background:#d4d0c8;box-shadow:inset 1px 1px 0 #fff,inset -1px -1px 0 #808080,inset 2px 2px 0 #d4d0c8,inset -2px -2px 0 #d4d0c8"></div>
<div class="" style="left:803px;top:302px;width:1px;height:1px;background:#503060"></div>
<div class="" style="left:806px;top:302px;width:1px;height:1px;background:#503060"></div>
<div class="" style="left:809px;top:302px;width:1px;height:1px;background:#503060"></div>
<div class="" style="left:520px;top:310.5px;width:103.5px;height:20.5px;background:#fff"></div>
<span class="t" style="left:522.3px;top:314.3px;font-size:11px;line-height:13px;color:#000;transform:scaleX(1.1281);">τ</span>
<span class="t" style="left:526.9px;top:317.3px;font-size:9px;line-height:10px;color:#000;">1</span>
<span class="t" style="left:531.9px;top:314.3px;font-size:11px;line-height:13px;color:#000;">[ns]</span>
<div class="sunken" style="left:624px;top:311px;width:74px;height:20px;"></div>
<div class="raised" style="left:681px;top:313px;width:15px;height:8px;"></div>
<svg style="left:685px;top:315px" width="7" height="4" viewBox="0 0 7 4"><path d="M0 4h7L3.500 0z" fill="#000"/></svg>
<div class="raised" style="left:681px;top:321px;width:15px;height:8px;"></div>
<svg style="left:685px;top:323px" width="7" height="4" viewBox="0 0 7 4"><path d="M0 0h7L3.500 4z" fill="#000"/></svg>
<span class="t" style="left:644.7px;top:314.3px;font-size:11px;line-height:13px;color:#000;transform:scaleX(0.9944);">0.0000</span>
<div class="" style="left:706px;top:322px;width:4px;height:1px;background:#000"></div>
<div class="" style="left:776px;top:311px;width:20px;height:20px;background:#fff"></div>
<svg style="left:783px;top:318px" width="9" height="8" viewBox="0 0 9 8"><path d="M0 3.500l1.300-1.300 2 2.300L8 0l.8 1.500L3.300 8z" fill="#000"/></svg>
<div class="raised1" style="left:798px;top:312px;width:18px;height:18px;background:#38b038;box-shadow:inset 1px 1px 0 #fff,inset -1px -1px 0 #808080,inset 2px 2px 0 #d4d0c8,inset -2px -2px 0 #d4d0c8"></div>
<div class="" style="left:803px;top:324px;width:1px;height:1px;background:#000"></div>
<div class="" style="left:806px;top:324px;width:1px;height:1px;background:#000"></div>
<div class="" style="left:809px;top:324px;width:1px;height:1px;background:#000"></div>
<div class="" style="left:520px;top:332.5px;width:103.5px;height:20.5px;background:#fff"></div>
<span class="t" style="left:521.8px;top:336.3px;font-size:11px;line-height:13px;color:#000;">I</span>
<span class="t" style="left:524.3px;top:339.3px;font-size:9px;line-height:10px;color:#000;">1</span>
<span class="t" style="left:529.9px;top:336.3px;font-size:11px;line-height:13px;color:#000;transform:scaleX(0.9547);">[kCnts]</span>
<div class="sunken" style="left:624px;top:333px;width:74px;height:20px;background:#d4d0c8"></div>
<span class="t" style="left:644.7px;top:336.3px;font-size:11px;line-height:13px;color:#000;transform:scaleX(0.9944);">0.0000</span>
<div class="" style="left:706px;top:344px;width:4px;height:1px;background:#000"></div>
<div class="" style="left:520px;top:354.5px;width:103.5px;height:20.5px;background:#fff"></div>
<span class="t" style="left:522.2px;top:358.3px;font-size:11px;line-height:13px;color:#000;transform:scaleX(1.0621);">A</span>
<span class="t" style="left:531.3px;top:361.3px;font-size:9px;line-height:10px;color:#000;transform:scaleX(0.9189);">Rel1</span>
<span class="t" style="left:549.3px;top:358.3px;font-size:11px;line-height:13px;color:#000;transform:scaleX(0.9682);">[%]</span>
<div class="sunken" style="left:624px;top:355px;width:74px;height:20px;background:#d4d0c8"></div>
<span class="t" style="left:644.7px;top:358.3px;font-size:11px;line-height:13px;color:#000;transform:scaleX(0.9944);">0.0000</span>
<div class="" style="left:706px;top:366px;width:4px;height:1px;background:#000"></div>
<div class="" style="left:520px;top:376.5px;width:103.5px;height:20.5px;background:#fff"></div>
<span class="t" style="left:521.8px;top:380.3px;font-size:11px;line-height:13px;color:#000;">I</span>
<span class="t" style="left:524.5px;top:383.3px;font-size:9px;line-height:10px;color:#000;transform:scaleX(0.9622);">Rel1</span>
<span class="t" style="left:543px;top:380.3px;font-size:11px;line-height:13px;color:#000;transform:scaleX(0.9870);">[%]</span>
<div class="sunken" style="left:624px;top:377px;width:74px;height:20px;background:#d4d0c8"></div>
<span class="t" style="left:644.7px;top:380.3px;font-size:11px;line-height:13px;color:#000;transform:scaleX(0.9944);">0.0000</span>
<div class="" style="left:706px;top:388px;width:4px;height:1px;background:#000"></div>
<div class="" style="left:520px;top:400.5px;width:103.5px;height:20.5px;background:#fff"></div>
<span class="t" style="left:522.3px;top:404.3px;font-size:11px;line-height:13px;color:#000;transform:scaleX(1.0166);">Bkgr</span>
<span class="t" style="left:546.7px;top:407.3px;font-size:9px;line-height:10px;color:#000;transform:scaleX(0.7937);">Dec</span>
<span class="t" style="left:560.6px;top:404.3px;font-size:11px;line-height:13px;color:#000;transform:scaleX(0.9022);">[kCnts]</span>
<div class="sunken" style="left:624px;top:401px;width:74px;height:20px;"></div>
<div class="raised" style="left:681px;top:403px;width:15px;height:8px;"></div>
<svg style="left:685px;top:405px" width="7" height="4" viewBox="0 0 7 4"><path d="M0 4h7L3.500 0z" fill="#000"/></svg>
<div class="raised" style="left:681px;top:411px;width:15px;height:8px;"></div>
<svg style="left:685px;top:413px" width="7" height="4" viewBox="0 0 7 4"><path d="M0 0h7L3.500 4z" fill="#000"/></svg>
<span class="t" style="left:644.7px;top:404.3px;font-size:11px;line-height:13px;color:#000;transform:scaleX(0.9944);">0.0000</span>
<div class="" style="left:706px;top:412px;width:4px;height:1px;background:#000"></div>
<div class="" style="left:776px;top:401px;width:20px;height:20px;background:#fff"></div>
<svg style="left:783px;top:408px" width="9" height="8" viewBox="0 0 9 8"><path d="M0 3.500l1.300-1.300 2 2.300L8 0l.8 1.500L3.300 8z" fill="#000"/></svg>
<div class="raised1" style="left:798px;top:402px;width:18px;height:18px;background:#d4d0c8;box-shadow:inset 1px 1px 0 #fff,inset -1px -1px 0 #808080,inset 2px 2px 0 #d4d0c8,inset -2px -2px 0 #d4d0c8"></div>
<div class="" style="left:803px;top:414px;width:1px;height:1px;background:#503060"></div>
<div class="" style="left:806px;top:414px;width:1px;height:1px;background:#503060"></div>
<div class="" style="left:809px;top:414px;width:1px;height:1px;background:#503060"></div>
<div class="" style="left:520px;top:424.5px;width:103.5px;height:20.5px;background:#fff"></div>
<span class="t" style="left:522.3px;top:428.3px;font-size:11px;line-height:13px;color:#000;transform:scaleX(1.0166);">Bkgr</span>
<span class="t" style="left:546.7px;top:431.3px;font-size:9px;line-height:10px;color:#000;transform:scaleX(0.7793);">IRF</span>
<span class="t" style="left:559.2px;top:428.3px;font-size:11px;line-height:13px;color:#000;transform:scaleX(0.9442);">[Cnts/Chnl]</span>
<div class="sunken" style="left:624px;top:425px;width:74px;height:20px;"></div>
<div class="raised" style="left:681px;top:427px;width:15px;height:8px;"></div>
<svg style="left:685px;top:429px" width="7" height="4" viewBox="0 0 7 4"><path d="M0 4h7L3.500 0z" fill="#000"/></svg>
<div class="raised" style="left:681px;top:435px;width:15px;height:8px;"></div>
<svg style="left:685px;top:437px" width="7" height="4" viewBox="0 0 7 4"><path d="M0 0h7L3.500 4z" fill="#000"/></svg>
<span class="t" style="left:644.7px;top:428.3px;font-size:11px;line-height:13px;color:#000;transform:scaleX(0.9944);">0.0000</span>
<div class="" style="left:706px;top:436px;width:4px;height:1px;background:#000"></div>
<div class="" style="left:776px;top:425px;width:20px;height:20px;background:#fff"></div>
<svg style="left:783px;top:432px" width="9" height="8" viewBox="0 0 9 8"><path d="M0 3.500l1.300-1.300 2 2.300L8 0l.8 1.500L3.300 8z" fill="#000"/></svg>
<div class="raised1" style="left:798px;top:426px;width:18px;height:18px;background:#d4d0c8;box-shadow:inset 1px 1px 0 #fff,inset -1px -1px 0 #808080,inset 2px 2px 0 #d4d0c8,inset -2px -2px 0 #d4d0c8"></div>
<div class="" style="left:803px;top:438px;width:1px;height:1px;background:#503060"></div>
<div class="" style="left:806px;top:438px;width:1px;height:1px;background:#503060"></div>
<div class="" style="left:809px;top:438px;width:1px;height:1px;background:#503060"></div>
<div class="" style="left:520px;top:446.5px;width:103.5px;height:20.5px;background:#fff"></div>
<span class="t" style="left:522.3px;top:450.3px;font-size:11px;line-height:13px;color:#000;transform:scaleX(0.9940);">Shift</span>
<span class="t" style="left:545.5px;top:453.3px;font-size:9px;line-height:10px;color:#000;transform:scaleX(0.8483);">IRF</span>
<span class="t" style="left:559.2px;top:450.3px;font-size:11px;line-height:13px;color:#000;transform:scaleX(0.9690);">[ps]</span>
<div class="sunken" style="left:624px;top:447px;width:74px;height:20px;"></div>
<div class="raised" style="left:681px;top:449px;width:15px;height:8px;"></div>
<svg style="left:685px;top:451px" width="7" height="4" viewBox="0 0 7 4"><path d="M0 4h7L3.500 0z" fill="#000"/></svg>
<div class="raised" style="left:681px;top:457px;width:15px;height:8px;"></div>
<svg style="left:685px;top:459px" width="7" height="4" viewBox="0 0 7 4"><path d="M0 0h7L3.500 4z" fill="#000"/></svg>
<span class="t" style="left:644.7px;top:450.3px;font-size:11px;line-height:13px;color:#000;transform:scaleX(0.9944);">0.0000</span>
<div class="" style="left:706px;top:458px;width:4px;height:1px;background:#000"></div>
<div class="" style="left:776px;top:447px;width:20px;height:20px;background:#fff"></div>
<svg style="left:783px;top:454px" width="9" height="8" viewBox="0 0 9 8"><path d="M0 3.500l1.300-1.300 2 2.300L8 0l.8 1.500L3.300 8z" fill="#000"/></svg>
<div class="raised1" style="left:798px;top:448px;width:18px;height:18px;background:#d4d0c8;box-shadow:inset 1px 1px 0 #fff,inset -1px -1px 0 #808080,inset 2px 2px 0 #d4d0c8,inset -2px -2px 0 #d4d0c8"></div>
<div class="" style="left:803px;top:460px;width:1px;height:1px;background:#503060"></div>
<div class="" style="left:806px;top:460px;width:1px;height:1px;background:#503060"></div>
<div class="" style="left:809px;top:460px;width:1px;height:1px;background:#503060"></div>
<div class="" style="left:520px;top:470.5px;width:103.5px;height:20.5px;background:#fff"></div>
<span class="t" style="left:522.3px;top:476.3px;font-size:9px;line-height:10px;color:#000;transform:scaleX(1.0105);">τ</span>
<span class="t" style="left:526.4px;top:477.3px;font-size:9px;line-height:10px;color:#000;transform:scaleX(0.8750);">AvInt</span>
<span class="t" style="left:545.5px;top:474.3px;font-size:11px;line-height:13px;color:#000;transform:scaleX(0.9577);">[ns]</span>
<div class="sunken" style="left:624px;top:471px;width:74px;height:20px;background:#d4d0c8"></div>
<span class="t" style="left:644.7px;top:474.3px;font-size:11px;line-height:13px;color:#000;transform:scaleX(0.9944);">0.0000</span>
<div class="" style="left:706px;top:482px;width:4px;height:1px;background:#000"></div>
<div class="" style="left:520px;top:492.5px;width:103.5px;height:20.5px;background:#fff"></div>
<span class="t" style="left:522.3px;top:498.3px;font-size:9px;line-height:10px;color:#000;transform:scaleX(1.0105);">τ</span>
<span class="t" style="left:526.4px;top:499.3px;font-size:9px;line-height:10px;color:#000;transform:scaleX(0.8529);">AvAmp</span>
<span class="t" style="left:551.8px;top:496.3px;font-size:11px;line-height:13px;color:#000;transform:scaleX(0.9577);">[ns]</span>
<div class="sunken" style="left:624px;top:493px;width:74px;height:20px;background:#d4d0c8"></div>
<span class="t" style="left:644.7px;top:496.3px;font-size:11px;line-height:13px;color:#000;transform:scaleX(0.9944);">0.0000</span>
<div class="" style="left:706px;top:504px;width:4px;height:1px;background:#000"></div>
<div class="" style="left:520px;top:399px;width:298px;height:2px;background:#38b038"></div>
<div class="" style="left:520px;top:423px;width:298px;height:2px;background:#38b038"></div>
<div class="" style="left:520px;top:468.5px;width:298px;height:2px;background:#38b038"></div>
<div class="" style="left:520px;top:514px;width:298px;height:4px;background:#fff;border:1px solid #000"></div>
<div class="" style="left:520px;top:518px;width:298px;height:36px;background:#d4d0c8"></div>
<div class="" style="left:519px;top:554px;width:300px;height:37px;background:#fff"></div>
<div class="btn" style="left:523px;top:561px;width:57px;height:24px;"></div>
<span class="t" style="left:538.5px;top:567px;font-size:11px;line-height:13px;color:#000;transform:scaleX(0.9512);">Clear</span>
<div class="btn" style="left:686px;top:561px;width:58px;height:24px;"></div>
<span class="t" style="left:692.5px;top:567px;font-size:11px;line-height:13px;color:#000;transform:scaleX(0.9373);">Fit Single</span>
<div class="btn" style="left:751px;top:561px;width:58px;height:24px;"></div>
<span class="t" style="left:765.5px;top:567px;font-size:11px;line-height:13px;color:#000;transform:scaleX(0.9855);">Fit All</span>
<div class="" style="left:519px;top:591px;width:300px;height:24px;background:#38b038"></div>
<div class="" style="left:521px;top:595px;width:16px;height:16px;border:1px solid #000"></div>
<div class="" style="left:524px;top:602px;width:10px;height:2px;background:#000"></div>
<span class="t" style="left:545.5px;top:597px;font-size:11px;line-height:13px;color:#000;font-weight:bold;transform:scaleX(1.0564);">Preview plot</span>
<div class="" style="left:519px;top:615px;width:300px;height:57px;background:#d4d0c8;box-shadow:inset 1px 1px 0 #fff,inset -1px -1px 0 #808080"></div>
<span class="t" style="left:526.5px;top:625px;font-size:11px;line-height:13px;color:#000;transform:scaleX(0.9129);">X:</span>
<span class="t" style="left:526.5px;top:652px;font-size:11px;line-height:13px;color:#000;transform:scaleX(0.9697);">Y:</span>
<div class="sunken" style="left:545px;top:621px;width:268px;height:21px;"></div>
<span class="t" style="left:548.5px;top:625.5px;font-size:11px;line-height:13px;color:#000;transform:scaleX(0.9506);">Curve Number</span>
<div class="raised" style="left:795px;top:623px;width:16px;height:17px;"></div>
<svg style="left:799px;top:629px" width="7" height="4" viewBox="0 0 7 4"><path d="M0 0h7L3.500 4z" fill="#000"/></svg>
<div class="sunken" style="left:545px;top:648px;width:268px;height:21px;"></div>
<span class="t" style="left:548.5px;top:652.5px;font-size:11px;line-height:13px;color:#000;">Integral Counts [kCnts]</span>
<div class="raised" style="left:795px;top:650px;width:16px;height:17px;"></div>
<svg style="left:799px;top:656px" width="7" height="4" viewBox="0 0 7 4"><path d="M0 0h7L3.500 4z" fill="#000"/></svg>
<div class="" style="left:519px;top:672px;width:300px;height:153px;background:#fff"></div>
<svg style="left:519px;top:672px" width="300" height="154" viewBox="0 0 300 154"><rect x="7.5" y="7.5" width="285" height="121" fill="#fff" stroke="#000"/><path d="M31.5 8v120" stroke="#c8c8c8"/><path d="M31.5 124.500v4" stroke="#000"/><path d="M90.5 8v120" stroke="#c8c8c8"/><path d="M90.5 124.500v4" stroke="#000"/><path d="M149.5 8v120" stroke="#c8c8c8"/><path d="M149.5 124.500v4" stroke="#000"/><path d="M209.5 8v120" stroke="#c8c8c8"/><path d="M209.5 124.500v4" stroke="#000"/><path d="M268.5 8v120" stroke="#c8c8c8"/><path d="M268.5 124.500v4" stroke="#000"/><path d="M8 17h284" stroke="#c8c8c8"/><path d="M8 17h4" stroke="#000"/><path d="M8 34h284" stroke="#c8c8c8"/><path d="M8 34h4" stroke="#000"/><path d="M8 51.5h284" stroke="#c8c8c8"/><path d="M8 51.5h4" stroke="#000"/><path d="M8 68.5h284" stroke="#c8c8c8"/><path d="M8 68.5h4" stroke="#000"/><path d="M8 84.5h284" stroke="#c8c8c8"/><path d="M8 84.5h4" stroke="#000"/><path d="M8 101.5h284" stroke="#c8c8c8"/><path d="M8 101.5h4" stroke="#000"/><path d="M8 118.5h284" stroke="#c8c8c8"/><path d="M8 118.5h4" stroke="#000"/><path d="M149.500 8v120" stroke="#e00000" stroke-width="1.200"/><rect x="147" y="64.500" width="5" height="5" fill="#000"/></svg>
<span class="t" style="left:542.8px;top:804px;font-size:11px;line-height:13px;color:#000;">0.0</span>
<span class="t" style="left:601.8px;top:804px;font-size:11px;line-height:13px;color:#000;">0.5</span>
<span class="t" style="left:660.8px;top:804px;font-size:11px;line-height:13px;color:#000;">1.0</span>
<span class="t" style="left:720.8px;top:804px;font-size:11px;line-height:13px;color:#000;">1.5</span>
<span class="t" style="left:779.8px;top:804px;font-size:11px;line-height:13px;color:#000;">2.0</span>
<div class="" style="left:519px;top:825px;width:300px;height:25px;background:#d4d0c8"></div>
<div class="" style="left:533px;top:835px;width:229px;height:3px;box-shadow:inset 1px 1px 0 #808080,inset -1px -1px 0 #fff;background:#d4d0c8"></div>
<div class="raised" style="left:527px;top:827px;width:11px;height:20px;"></div>
<span class="t" style="left:785px;top:831px;font-size:11px;line-height:13px;color:#000;">1 / 1</span>
<div class="" style="left:827px;top:189px;width:458px;height:660px;background:#fff;box-shadow:inset -1px -1px 0 #808080"></div>
<svg style="left:826px;top:188px" width="460" height="662" viewBox="0 0 460 662"><g shape-rendering="crispEdges"><path d="M78.5 9.5L78.5 484.5" stroke="#ebebeb" stroke-width="1"/><path d="M78.5 499.5L78.5 616.5" stroke="#ebebeb" stroke-width="1"/><path d="M97.5 9.5L97.5 484.5" stroke="#ebebeb" stroke-width="1"/><path d="M97.5 499.5L97.5 616.5" stroke="#ebebeb" stroke-width="1"/><path d="M117.5 9.5L117.5 484.5" stroke="#bcbcbc" stroke-width="1"/><path d="M117.5 499.5L117.5 616.5" stroke="#bcbcbc" stroke-width="1"/><path d="M136.5 9.5L136.5 484.5" stroke="#ebebeb" stroke-width="1"/><path d="M136.5 499.5L136.5 616.5" stroke="#ebebeb" stroke-width="1"/><path d="M156.5 9.5L156.5 484.5" stroke="#ebebeb" stroke-width="1"/><path d="M156.5 499.5L156.5 616.5" stroke="#ebebeb" stroke-width="1"/><path d="M176.5 9.5L176.5 484.5" stroke="#bcbcbc" stroke-width="1"/><path d="M176.5 499.5L176.5 616.5" stroke="#bcbcbc" stroke-width="1"/><path d="M195.5 9.5L195.5 484.5" stroke="#ebebeb" stroke-width="1"/><path d="M195.5 499.5L195.5 616.5" stroke="#ebebeb" stroke-width="1"/><path d="M215.5 9.5L215.5 484.5" stroke="#ebebeb" stroke-width="1"/><path d="M215.5 499.5L215.5 616.5" stroke="#ebebeb" stroke-width="1"/><path d="M235.5 9.5L235.5 484.5" stroke="#bcbcbc" stroke-width="1"/><path d="M235.5 499.5L235.5 616.5" stroke="#bcbcbc" stroke-width="1"/><path d="M254.5 9.5L254.5 484.5" stroke="#ebebeb" stroke-width="1"/><path d="M254.5 499.5L254.5 616.5" stroke="#ebebeb" stroke-width="1"/><path d="M274.5 9.5L274.5 484.5" stroke="#ebebeb" stroke-width="1"/><path d="M274.5 499.5L274.5 616.5" stroke="#ebebeb" stroke-width="1"/><path d="M293.5 9.5L293.5 484.5" stroke="#bcbcbc" stroke-width="1"/><path d="M293.5 499.5L293.5 616.5" stroke="#bcbcbc" stroke-width="1"/><path d="M313.5 9.5L313.5 484.5" stroke="#ebebeb" stroke-width="1"/><path d="M313.5 499.5L313.5 616.5" stroke="#ebebeb" stroke-width="1"/><path d="M333.5 9.5L333.5 484.5" stroke="#ebebeb" stroke-width="1"/><path d="M333.5 499.5L333.5 616.5" stroke="#ebebeb" stroke-width="1"/><path d="M352.5 9.5L352.5 484.5" stroke="#bcbcbc" stroke-width="1"/><path d="M352.5 499.5L352.5 616.5" stroke="#bcbcbc" stroke-width="1"/><path d="M372.5 9.5L372.5 484.5" stroke="#ebebeb" stroke-width="1"/><path d="M372.5 499.5L372.5 616.5" stroke="#ebebeb" stroke-width="1"/><path d="M391.5 9.5L391.5 484.5" stroke="#ebebeb" stroke-width="1"/><path d="M391.5 499.5L391.5 616.5" stroke="#ebebeb" stroke-width="1"/><path d="M411.5 9.5L411.5 484.5" stroke="#bcbcbc" stroke-width="1"/><path d="M411.5 499.5L411.5 616.5" stroke="#bcbcbc" stroke-width="1"/><path d="M431.5 9.5L431.5 484.5" stroke="#ebebeb" stroke-width="1"/><path d="M431.5 499.5L431.5 616.5" stroke="#ebebeb" stroke-width="1"/><path d="M58.5 474.5L450.5 474.5" stroke="#bcbcbc" stroke-width="1"/><path d="M58.5 443.5L450.5 443.5" stroke="#ebebeb" stroke-width="1"/><path d="M58.5 424.5L450.5 424.5" stroke="#ebebeb" stroke-width="1"/><path d="M58.5 412.5L450.5 412.5" stroke="#ebebeb" stroke-width="1"/><path d="M58.5 401.5L450.5 401.5" stroke="#ebebeb" stroke-width="1"/><path d="M58.5 393.5L450.5 393.5" stroke="#ebebeb" stroke-width="1"/><path d="M58.5 386.5L450.5 386.5" stroke="#ebebeb" stroke-width="1"/><path d="M58.5 380.5L450.5 380.5" stroke="#ebebeb" stroke-width="1"/><path d="M58.5 375.5L450.5 375.5" stroke="#ebebeb" stroke-width="1"/><path d="M58.5 370.5L450.5 370.5" stroke="#bcbcbc" stroke-width="1"/><path d="M58.5 339.5L450.5 339.5" stroke="#ebebeb" stroke-width="1"/><path d="M58.5 321.5L450.5 321.5" stroke="#ebebeb" stroke-width="1"/><path d="M58.5 308.5L450.5 308.5" stroke="#ebebeb" stroke-width="1"/><path d="M58.5 298.5L450.5 298.5" stroke="#ebebeb" stroke-width="1"/><path d="M58.5 290.5L450.5 290.5" stroke="#ebebeb" stroke-width="1"/><path d="M58.5 283.5L450.5 283.5" stroke="#ebebeb" stroke-width="1"/><path d="M58.5 277.5L450.5 277.5" stroke="#ebebeb" stroke-width="1"/><path d="M58.5 271.5L450.5 271.5" stroke="#ebebeb" stroke-width="1"/><path d="M58.5 267.5L450.5 267.5" stroke="#bcbcbc" stroke-width="1"/><path d="M58.5 235.5L450.5 235.5" stroke="#ebebeb" stroke-width="1"/><path d="M58.5 217.5L450.5 217.5" stroke="#ebebeb" stroke-width="1"/><path d="M58.5 204.5L450.5 204.5" stroke="#ebebeb" stroke-width="1"/><path d="M58.5 194.5L450.5 194.5" stroke="#ebebeb" stroke-width="1"/><path d="M58.5 186.5L450.5 186.5" stroke="#ebebeb" stroke-width="1"/><path d="M58.5 179.5L450.5 179.5" stroke="#ebebeb" stroke-width="1"/><path d="M58.5 173.5L450.5 173.5" stroke="#ebebeb" stroke-width="1"/><path d="M58.5 167.5L450.5 167.5" stroke="#ebebeb" stroke-width="1"/><path d="M58.5 163.5L450.5 163.5" stroke="#bcbcbc" stroke-width="1"/><path d="M58.5 132.5L450.5 132.5" stroke="#ebebeb" stroke-width="1"/><path d="M58.5 113.5L450.5 113.5" stroke="#ebebeb" stroke-width="1"/><path d="M58.5 100.5L450.5 100.5" stroke="#ebebeb" stroke-width="1"/><path d="M58.5 90.5L450.5 90.5" stroke="#ebebeb" stroke-width="1"/><path d="M58.5 82.5L450.5 82.5" stroke="#ebebeb" stroke-width="1"/><path d="M58.5 75.5L450.5 75.5" stroke="#ebebeb" stroke-width="1"/><path d="M58.5 69.5L450.5 69.5" stroke="#ebebeb" stroke-width="1"/><path d="M58.5 64.5L450.5 64.5" stroke="#ebebeb" stroke-width="1"/><path d="M58.5 59.5L450.5 59.5" stroke="#bcbcbc" stroke-width="1"/><path d="M58.5 28.5L450.5 28.5" stroke="#ebebeb" stroke-width="1"/><path d="M58.5 9.5L450.5 9.5" stroke="#ebebeb" stroke-width="1"/><path d="M58.5 479.5L450.5 479.5" stroke="#ebebeb" stroke-width="1"/><path d="M58.5 610.5L450.5 610.5" stroke="#bcbcbc" stroke-width="1"/><path d="M58.5 604.5L450.5 604.5" stroke="#ebebeb" stroke-width="1"/><path d="M58.5 598.5L450.5 598.5" stroke="#ebebeb" stroke-width="1"/><path d="M58.5 592.5L450.5 592.5" stroke="#bcbcbc" stroke-width="1"/><path d="M58.5 586.5L450.5 586.5" stroke="#ebebeb" stroke-width="1"/><path d="M58.5 580.5L450.5 580.5" stroke="#ebebeb" stroke-width="1"/><path d="M58.5 575.5L450.5 575.5" stroke="#bcbcbc" stroke-width="1"/><path d="M58.5 569.5L450.5 569.5" stroke="#ebebeb" stroke-width="1"/><path d="M58.5 563.5L450.5 563.5" stroke="#ebebeb" stroke-width="1"/><path d="M58.5 557.5L450.5 557.5" stroke="#bcbcbc" stroke-width="1"/><path d="M58.5 551.5L450.5 551.5" stroke="#ebebeb" stroke-width="1"/><path d="M58.5 545.5L450.5 545.5" stroke="#ebebeb" stroke-width="1"/><path d="M58.5 540.5L450.5 540.5" stroke="#bcbcbc" stroke-width="1"/><path d="M58.5 534.5L450.5 534.5" stroke="#ebebeb" stroke-width="1"/><path d="M58.5 528.5L450.5 528.5" stroke="#ebebeb" stroke-width="1"/><path d="M58.5 522.5L450.5 522.5" stroke="#bcbcbc" stroke-width="1"/><path d="M58.5 516.5L450.5 516.5" stroke="#ebebeb" stroke-width="1"/><path d="M58.5 510.5L450.5 510.5" stroke="#ebebeb" stroke-width="1"/><path d="M58.5 505.5L450.5 505.5" stroke="#bcbcbc" stroke-width="1"/></g><clipPath id="pc"><rect x="58.5" y="9.5" width="392.0" height="475.0"/></clipPath><g clip-path="url(#pc)"><path d="M58.5 443.3L58.7 443.3L59.0 443.3L59.2 474.5L59.4 484.5L59.7 484.5L59.9 484.5L60.1 474.5L60.4 425.0L60.6 474.5L60.9 412.0L61.1 474.5L61.3 425.0L61.6 474.5L61.8 425.0L62.0 474.5L62.3 443.3L62.5 443.3L62.7 484.5L63.0 484.5L63.2 474.5L63.4 443.3L63.7 443.3L63.9 474.5L64.1 425.0L64.4 425.0L64.6 474.5L64.9 474.5L65.1 484.5L65.3 425.0L65.6 474.5L65.8 474.5L66.0 474.5L66.3 474.5L66.5 484.5L66.7 425.0L67.0 425.0L67.2 425.0L67.4 443.3L67.7 484.5L67.9 484.5L68.1 484.5L68.4 484.5L68.6 425.0L68.9 443.3L69.1 474.5L69.3 425.0L69.6 474.5L69.8 425.0L70.0 443.3L70.3 474.5L70.5 425.0L70.7 474.5L71.0 443.3L71.2 443.3L71.4 443.3L71.7 443.3L71.9 412.0L72.1 474.5L72.4 474.5L72.6 474.5L72.9 474.5L73.1 443.3L73.3 474.5L73.6 412.0L73.8 474.5L74.0 474.5L74.3 402.0L74.5 402.0L74.7 443.3L75.0 386.8L75.2 484.5L75.4 412.0L75.7 425.0L75.9 393.8L76.1 307.2L76.4 232.3L76.6 167.2L76.9 119.4L77.1 80.6L77.3 56.7L77.6 43.9L77.8 40.0L78.0 43.6L78.3 49.8L78.5 58.6L78.7 68.6L79.0 78.6L79.2 89.0L79.4 98.0L79.7 105.9L79.9 117.1L80.2 125.3L80.4 135.6L80.6 142.6L80.9 154.1L81.1 163.5L81.3 170.3L81.6 177.4L81.8 189.0L82.0 198.2L82.3 203.8L82.5 216.5L82.7 217.6L83.0 234.7L83.2 237.6L83.4 249.9L83.7 253.1L83.9 260.3L84.2 260.7L84.4 265.7L84.6 272.8L84.9 285.0L85.1 279.4L85.3 293.9L85.6 282.4L85.8 303.0L86.0 310.6L86.3 296.5L86.5 294.8L86.7 297.3L87.0 310.6L87.2 303.0L87.4 309.4L87.7 310.6L87.9 303.0L88.2 322.8L88.4 322.8L88.6 306.1L88.9 329.5L89.1 311.8L89.3 314.3L89.6 315.6L89.8 321.2L90.0 327.7L90.3 315.6L90.5 311.8L90.7 304.0L91.0 314.3L91.2 333.2L91.4 321.2L91.7 327.7L91.9 324.4L92.2 321.2L92.4 311.8L92.6 326.0L92.9 308.3L93.1 317.0L93.3 308.3L93.6 315.6L93.8 311.8L94.0 301.0L94.3 294.8L94.5 287.8L94.7 275.9L95.0 270.8L95.2 276.5L95.4 258.4L95.7 264.0L95.9 266.1L96.2 259.2L96.4 261.1L96.6 260.7L96.9 252.5L97.1 257.3L97.3 260.7L97.6 261.9L97.8 270.8L98.0 265.2L98.3 275.4L98.5 280.6L98.7 284.4L99.0 290.0L99.2 299.1L99.4 310.6L99.7 310.6L99.9 327.7L100.2 344.3L100.4 327.7L100.6 335.2L100.9 339.5L101.1 349.6L101.3 358.9L101.6 352.5L101.8 375.5L102.0 366.5L102.3 362.5L102.5 352.5L102.7 393.8L103.0 375.5L103.2 344.3L103.4 349.6L103.7 370.8L103.9 386.8L104.2 362.5L104.4 370.8L104.6 355.6L104.9 362.5L105.1 366.5L105.3 402.0L105.6 366.5L105.8 380.8L106.0 386.8L106.3 370.8L106.5 362.5L106.7 362.5L107.0 380.8L107.2 386.8L107.4 380.8L107.7 380.8L107.9 366.5L108.2 380.8L108.4 370.8L108.6 362.5L108.9 370.8L109.1 386.8L109.3 402.0L109.6 380.8L109.8 366.5L110.0 358.9L110.3 393.8L110.5 362.5L110.7 402.0L111.0 393.8L111.2 380.8L111.5 386.8L111.7 370.8L111.9 370.8L112.2 386.8L112.4 393.8L112.6 375.5L112.9 386.8L113.1 402.0L113.3 375.5L113.6 412.0L113.8 402.0L114.0 375.5L114.3 402.0L114.5 386.8L114.7 393.8L115.0 393.8L115.2 386.8L115.5 425.0L115.7 375.5L115.9 380.8L116.2 366.5L116.4 412.0L116.6 375.5L116.9 402.0L117.1 474.5L117.3 425.0L117.6 443.3L117.8 386.8L118.0 425.0L118.3 425.0L118.5 402.0L118.7 386.8L119.0 474.5L119.2 425.0L119.5 474.5L119.7 484.5L119.9 474.5L120.2 402.0L120.4 393.8L120.6 412.0L120.9 443.3L121.1 443.3L121.3 412.0L121.6 443.3L121.8 425.0L122.0 443.3L122.3 443.3L122.5 425.0L122.7 393.8L123.0 443.3L123.2 425.0L123.5 402.0L123.7 386.8L123.9 402.0L124.2 425.0L124.4 443.3L124.6 443.3L124.9 443.3L125.1 425.0L125.3 443.3L125.6 412.0L125.8 425.0L126.0 474.5L126.3 393.8L126.5 412.0L126.7 443.3L127.0 425.0L127.2 474.5L127.5 402.0L127.7 425.0L127.9 425.0L128.2 402.0L128.4 474.5L128.6 443.3L128.9 474.5L129.1 484.5L129.3 425.0L129.6 443.3L129.8 425.0L130.0 484.5L130.3 443.3L130.5 412.0L130.7 484.5L131.0 484.5L131.2 484.5L131.5 402.0L131.7 474.5L131.9 474.5L132.2 412.0L132.4 412.0L132.6 425.0L132.9 425.0L133.1 402.0L133.3 425.0L133.6 474.5L133.8 484.5L134.0 474.5L134.3 474.5L134.5 425.0L134.7 443.3L135.0 412.0L135.2 443.3L135.5 425.0L135.7 484.5L135.9 484.5L136.2 443.3L136.4 402.0L136.6 402.0L136.9 412.0L137.1 425.0L137.3 484.5L137.6 474.5L137.8 443.3L138.0 443.3L138.3 412.0L138.5 474.5L138.7 484.5L139.0 474.5L139.2 484.5L139.5 484.5L139.7 443.3L139.9 443.3L140.2 484.5L140.4 474.5L140.6 474.5L140.9 484.5L141.1 425.0L141.3 443.3L141.6 474.5L141.8 443.3L142.0 443.3L142.3 474.5L142.5 474.5L142.7 425.0L143.0 443.3L143.2 425.0L143.5 402.0L143.7 474.5L143.9 425.0L144.2 425.0L144.4 474.5L144.6 484.5L144.9 474.5L145.1 412.0L145.3 474.5L145.6 474.5L145.8 484.5L146.0 474.5L146.3 412.0L146.5 474.5L146.8 474.5L147.0 443.3L147.2 425.0L147.5 425.0L147.7 484.5L147.9 474.5L148.2 402.0L148.4 443.3L148.6 443.3L148.9 474.5L149.1 443.3L149.3 412.0L149.6 425.0L149.8 425.0L150.0 474.5L150.3 474.5L150.5 443.3L150.8 474.5L151.0 484.5L151.2 474.5L151.5 474.5L151.7 474.5L151.9 443.3L152.2 484.5L152.4 484.5L152.6 425.0L152.9 443.3L153.1 425.0L153.3 425.0L153.6 412.0L153.8 474.5L154.0 443.3L154.3 425.0L154.5 443.3L154.8 484.5L155.0 474.5L155.2 443.3L155.5 474.5L155.7 443.3L155.9 443.3L156.2 474.5L156.4 443.3L156.6 443.3L156.9 425.0L157.1 474.5L157.3 484.5L157.6 474.5L157.8 484.5L158.0 474.5L158.3 484.5L158.5 425.0L158.8 425.0L159.0 443.3L159.2 474.5L159.5 443.3L159.7 425.0L159.9 474.5L160.2 484.5L160.4 474.5L160.6 484.5L160.9 443.3L161.1 474.5L161.3 443.3L161.6 484.5L161.8 425.0L162.0 425.0L162.3 474.5L162.5 425.0L162.8 474.5L163.0 443.3L163.2 443.3L163.5 443.3L163.7 443.3L163.9 425.0L164.2 484.5L164.4 443.3L164.6 474.5L164.9 425.0L165.1 443.3L165.3 484.5L165.6 425.0L165.8 474.5L166.0 412.0L166.3 484.5L166.5 484.5L166.8 402.0L167.0 443.3L167.2 443.3L167.5 474.5L167.7 443.3L167.9 425.0L168.2 474.5L168.4 484.5L168.6 484.5L168.9 425.0L169.1 474.5L169.3 443.3L169.6 443.3L169.8 443.3L170.0 474.5L170.3 484.5L170.5 425.0L170.8 474.5L171.0 474.5L171.2 474.5L171.5 412.0L171.7 474.5L171.9 443.3L172.2 443.3L172.4 443.3L172.6 474.5L172.9 425.0L173.1 474.5L173.3 425.0L173.6 425.0L173.8 425.0L174.0 484.5L174.3 443.3L174.5 484.5L174.8 443.3L175.0 484.5L175.2 484.5L175.5 425.0L175.7 474.5L175.9 474.5L176.2 474.5L176.4 474.5L176.6 474.5L176.9 474.5L177.1 474.5L177.3 474.5L177.6 484.5L177.8 474.5L178.0 402.0L178.3 443.3L178.5 443.3L178.8 474.5L179.0 474.5L179.2 425.0L179.5 484.5L179.7 443.3L179.9 474.5L180.2 474.5L180.4 484.5L180.6 474.5L180.9 412.0L181.1 484.5L181.3 402.0L181.6 484.5L181.8 412.0L182.0 443.3L182.3 474.5L182.5 443.3L182.8 443.3L183.0 484.5L183.2 393.8L183.5 474.5L183.7 484.5L183.9 474.5L184.2 443.3L184.4 474.5L184.6 474.5L184.9 484.5L185.1 474.5L185.3 484.5L185.6 474.5L185.8 443.3L186.1 484.5L186.3 474.5L186.5 443.3L186.8 484.5L187.0 474.5L187.2 443.3L187.5 474.5L187.7 474.5L187.9 484.5L188.2 425.0L188.4 443.3L188.6 474.5L188.9 443.3L189.1 443.3L189.3 474.5L189.6 474.5L189.8 474.5L190.1 474.5L190.3 412.0L190.5 474.5L190.8 484.5L191.0 443.3L191.2 425.0L191.5 443.3L191.7 484.5L191.9 474.5L192.2 474.5L192.4 474.5L192.6 474.5L192.9 443.3L193.1 484.5L193.3 425.0L193.6 484.5L193.8 484.5L194.1 474.5L194.3 443.3L194.5 474.5L194.8 425.0L195.0 443.3L195.2 484.5L195.5 443.3L195.7 425.0L195.9 443.3L196.2 474.5L196.4 474.5L196.6 443.3L196.9 484.5L197.1 484.5L197.3 484.5L197.6 412.0L197.8 443.3L198.1 484.5L198.3 474.5L198.5 474.5L198.8 474.5L199.0 484.5L199.2 425.0L199.5 412.0L199.7 484.5L199.9 474.5L200.2 484.5L200.4 443.3L200.6 484.5L200.9 484.5L201.1 443.3L201.3 443.3L201.6 402.0L201.8 425.0L202.1 393.8L202.3 484.5L202.5 484.5L202.8 474.5L203.0 425.0L203.2 474.5L203.5 474.5L203.7 484.5L203.9 474.5L204.2 474.5L204.4 425.0L204.6 425.0L204.9 484.5L205.1 443.3L205.3 393.8L205.6 443.3L205.8 474.5L206.1 474.5L206.3 412.0L206.5 443.3L206.8 425.0L207.0 474.5L207.2 484.5L207.5 412.0L207.7 443.3L207.9 474.5L208.2 443.3L208.4 443.3L208.6 443.3L208.9 484.5L209.1 443.3L209.3 484.5L209.6 443.3L209.8 474.5L210.1 425.0L210.3 474.5L210.5 474.5L210.8 425.0L211.0 474.5L211.2 474.5L211.5 443.3L211.7 425.0L211.9 443.3L212.2 425.0L212.4 425.0L212.6 484.5L212.9 443.3L213.1 402.0L213.3 474.5L213.6 474.5L213.8 474.5L214.1 474.5L214.3 474.5L214.5 474.5L214.8 474.5L215.0 474.5L215.2 484.5L215.5 425.0L215.7 474.5L215.9 484.5L216.2 474.5L216.4 425.0L216.6 443.3L216.9 484.5L217.1 484.5L217.3 412.0L217.6 443.3L217.8 443.3L218.1 474.5L218.3 474.5L218.5 443.3L218.8 474.5L219.0 474.5L219.2 412.0L219.5 443.3L219.7 474.5L219.9 484.5L220.2 474.5L220.4 474.5L220.6 443.3L220.9 474.5L221.1 412.0L221.4 474.5L221.6 474.5L221.8 425.0L222.1 474.5L222.3 484.5L222.5 443.3L222.8 484.5L223.0 484.5L223.2 484.5L223.5 425.0L223.7 484.5L223.9 393.8L224.2 425.0L224.4 484.5L224.6 484.5L224.9 474.5L225.1 474.5L225.4 443.3L225.6 474.5L225.8 474.5L226.1 443.3L226.3 443.3L226.5 443.3L226.8 484.5L227.0 474.5L227.2 443.3L227.5 412.0L227.7 484.5L227.9 443.3L228.2 474.5L228.4 474.5L228.6 474.5L228.9 425.0L229.1 474.5L229.4 484.5L229.6 484.5L229.8 484.5L230.1 443.3L230.3 474.5L230.5 474.5L230.8 402.0L231.0 474.5L231.2 474.5L231.5 474.5L231.7 425.0L231.9 412.0L232.2 412.0L232.4 412.0L232.6 443.3L232.9 484.5L233.1 425.0L233.4 412.0L233.6 443.3L233.8 425.0L234.1 443.3L234.3 443.3L234.5 474.5L234.8 425.0L235.0 443.3L235.2 484.5L235.5 474.5L235.7 425.0L235.9 484.5L236.2 443.3L236.4 443.3L236.6 412.0L236.9 425.0L237.1 474.5L237.4 484.5L237.6 425.0L237.8 443.3L238.1 474.5L238.3 425.0L238.5 443.3L238.8 443.3L239.0 474.5L239.2 443.3L239.5 443.3L239.7 474.5L239.9 484.5L240.2 443.3L240.4 443.3L240.6 425.0L240.9 484.5L241.1 474.5L241.4 402.0L241.6 443.3L241.8 425.0L242.1 443.3L242.3 443.3L242.5 474.5L242.8 412.0L243.0 443.3L243.2 412.0L243.5 474.5L243.7 474.5L243.9 474.5L244.2 484.5L244.4 474.5L244.6 474.5L244.9 474.5L245.1 443.3L245.4 474.5L245.6 443.3L245.8 484.5L246.1 474.5L246.3 443.3L246.5 474.5L246.8 412.0L247.0 484.5L247.2 474.5L247.5 443.3L247.7 412.0L247.9 484.5L248.2 443.3L248.4 484.5L248.6 484.5L248.9 474.5L249.1 425.0L249.4 443.3L249.6 474.5L249.8 474.5L250.1 474.5L250.3 443.3L250.5 484.5L250.8 474.5L251.0 425.0L251.2 443.3L251.5 484.5L251.7 474.5L251.9 412.0L252.2 443.3L252.4 402.0L252.7 402.0L252.9 484.5L253.1 474.5L253.4 474.5L253.6 484.5L253.8 443.3L254.1 474.5L254.3 474.5L254.5 474.5L254.8 474.5L255.0 425.0L255.2 484.5L255.5 443.3L255.7 443.3L255.9 484.5L256.2 484.5L256.4 443.3L256.7 474.5L256.9 474.5L257.1 474.5L257.4 443.3L257.6 484.5L257.8 474.5L258.1 443.3L258.3 474.5L258.5 484.5L258.8 412.0L259.0 412.0L259.2 443.3L259.5 443.3L259.7 443.3L259.9 443.3L260.2 443.3L260.4 474.5L260.7 474.5L260.9 425.0L261.1 425.0L261.4 474.5L261.6 443.3L261.8 443.3L262.1 425.0L262.3 443.3L262.5 443.3L262.8 474.5L263.0 484.5L263.2 484.5L263.5 443.3L263.7 443.3L263.9 474.5L264.2 474.5L264.4 474.5L264.7 484.5L264.9 443.3L265.1 443.3L265.4 474.5L265.6 425.0L265.8 474.5L266.1 474.5L266.3 474.5L266.5 474.5L266.8 443.3L267.0 412.0L267.2 443.3L267.5 484.5L267.7 425.0L267.9 443.3L268.2 474.5L268.4 484.5L268.7 443.3L268.9 443.3L269.1 474.5L269.4 474.5L269.6 474.5L269.8 484.5L270.1 474.5L270.3 443.3L270.5 443.3L270.8 484.5L271.0 474.5L271.2 425.0L271.5 425.0L271.7 443.3L271.9 474.5L272.2 484.5L272.4 484.5L272.7 443.3L272.9 443.3L273.1 474.5L273.4 474.5L273.6 474.5L273.8 443.3L274.1 484.5L274.3 474.5L274.5 484.5L274.8 474.5L275.0 474.5L275.2 443.3L275.5 474.5L275.7 425.0L275.9 443.3L276.2 425.0L276.4 443.3L276.7 484.5L276.9 443.3L277.1 443.3L277.4 484.5L277.6 412.0L277.8 474.5L278.1 474.5L278.3 443.3L278.5 443.3L278.8 443.3L279.0 474.5L279.2 474.5L279.5 474.5L279.7 484.5L279.9 425.0L280.2 474.5L280.4 443.3L280.7 484.5L280.9 484.5L281.1 474.5L281.4 425.0L281.6 474.5L281.8 484.5L282.1 443.3L282.3 474.5L282.5 443.3L282.8 474.5L283.0 484.5L283.2 412.0L283.5 443.3L283.7 425.0L283.9 474.5L284.2 474.5L284.4 484.5L284.7 443.3L284.9 443.3L285.1 412.0L285.4 443.3L285.6 474.5L285.8 443.3L286.1 443.3L286.3 474.5L286.5 393.8L286.8 474.5L287.0 474.5L287.2 474.5L287.5 412.0L287.7 484.5L288.0 484.5L288.2 425.0L288.4 402.0L288.7 412.0L288.9 443.3L289.1 484.5L289.4 425.0L289.6 412.0L289.8 484.5L290.1 412.0L290.3 443.3L290.5 443.3L290.8 425.0L291.0 474.5L291.2 484.5L291.5 443.3L291.7 474.5L292.0 474.5L292.2 484.5L292.4 484.5L292.7 474.5L292.9 443.3L293.1 412.0L293.4 443.3L293.6 474.5L293.8 425.0L294.1 425.0L294.3 443.3L294.5 443.3L294.8 443.3L295.0 443.3L295.2 474.5L295.5 484.5L295.7 425.0L296.0 425.0L296.2 474.5L296.4 484.5L296.7 484.5L296.9 425.0L297.1 474.5L297.4 474.5L297.6 474.5L297.8 474.5L298.1 474.5L298.3 474.5L298.5 443.3L298.8 484.5L299.0 443.3L299.2 474.5L299.5 484.5L299.7 443.3L300.0 474.5L300.2 412.0L300.4 443.3L300.7 474.5L300.9 412.0L301.1 484.5L301.4 484.5L301.6 484.5L301.8 474.5L302.1 474.5L302.3 402.0L302.5 474.5L302.8 484.5L303.0 474.5L303.2 443.3L303.5 402.0L303.7 474.5L304.0 402.0L304.2 443.3L304.4 484.5L304.7 443.3L304.9 402.0L305.1 443.3L305.4 484.5L305.6 443.3L305.8 474.5L306.1 474.5L306.3 474.5L306.5 484.5L306.8 474.5L307.0 474.5L307.2 402.0L307.5 425.0L307.7 484.5L308.0 474.5L308.2 443.3L308.4 402.0L308.7 474.5L308.9 474.5L309.1 412.0L309.4 474.5L309.6 402.0L309.8 443.3L310.1 474.5L310.3 474.5L310.5 402.0L310.8 443.3L311.0 484.5L311.2 484.5L311.5 474.5L311.7 474.5L312.0 425.0L312.2 425.0L312.4 474.5L312.7 443.3L312.9 484.5L313.1 474.5L313.4 474.5L313.6 443.3L313.8 484.5L314.1 474.5L314.3 443.3L314.5 443.3L314.8 425.0L315.0 443.3L315.2 484.5L315.5 443.3L315.7 425.0L316.0 474.5L316.2 412.0L316.4 443.3L316.7 484.5L316.9 474.5L317.1 484.5L317.4 402.0L317.6 484.5L317.8 425.0L318.1 443.3L318.3 412.0L318.5 474.5L318.8 412.0L319.0 484.5L319.2 443.3L319.5 425.0L319.7 474.5L320.0 443.3L320.2 425.0L320.4 443.3L320.7 484.5L320.9 443.3L321.1 484.5L321.4 425.0L321.6 443.3L321.8 443.3L322.1 443.3L322.3 443.3L322.5 474.5L322.8 425.0L323.0 474.5L323.2 443.3L323.5 474.5L323.7 484.5L324.0 443.3L324.2 474.5L324.4 474.5L324.7 425.0L324.9 425.0L325.1 484.5L325.4 443.3L325.6 474.5L325.8 443.3L326.1 474.5L326.3 474.5L326.5 484.5L326.8 484.5L327.0 474.5L327.3 474.5L327.5 425.0L327.7 412.0L328.0 443.3L328.2 412.0L328.4 474.5L328.7 484.5L328.9 474.5L329.1 484.5L329.4 443.3L329.6 443.3L329.8 443.3L330.1 474.5L330.3 474.5L330.5 425.0L330.8 474.5L331.0 474.5L331.3 412.0L331.5 443.3L331.7 443.3L332.0 484.5L332.2 484.5L332.4 474.5L332.7 474.5L332.9 412.0L333.1 425.0L333.4 474.5L333.6 425.0L333.8 425.0L334.1 474.5L334.3 412.0L334.5 443.3L334.8 484.5L335.0 474.5L335.3 443.3L335.5 484.5L335.7 474.5L336.0 443.3L336.2 425.0L336.4 474.5L336.7 474.5L336.9 425.0L337.1 425.0L337.4 484.5L337.6 474.5L337.8 443.3L338.1 425.0L338.3 484.5L338.5 484.5L338.8 443.3L339.0 425.0L339.3 443.3L339.5 474.5L339.7 474.5L340.0 484.5L340.2 425.0L340.4 484.5L340.7 443.3L340.9 474.5L341.1 474.5L341.4 474.5L341.6 474.5L341.8 443.3L342.1 425.0L342.3 484.5L342.5 474.5L342.8 474.5L343.0 474.5L343.3 474.5L343.5 412.0L343.7 474.5L344.0 474.5L344.2 474.5L344.4 443.3L344.7 474.5L344.9 484.5L345.1 484.5L345.4 474.5L345.6 425.0L345.8 425.0L346.1 443.3L346.3 412.0L346.5 443.3L346.8 484.5L347.0 474.5L347.3 425.0L347.5 474.5L347.7 474.5L348.0 474.5L348.2 484.5L348.4 474.5L348.7 474.5L348.9 474.5L349.1 402.0L349.4 484.5L349.6 484.5L349.8 484.5L350.1 474.5L350.3 474.5L350.5 484.5L350.8 474.5L351.0 474.5L351.3 484.5L351.5 425.0L351.7 425.0L352.0 474.5L352.2 412.0L352.4 484.5L352.7 474.5L352.9 425.0L353.1 474.5L353.4 443.3L353.6 443.3L353.8 474.5L354.1 474.5L354.3 484.5L354.5 474.5L354.8 425.0L355.0 425.0L355.3 443.3L355.5 474.5L355.7 474.5L356.0 474.5L356.2 412.0L356.4 425.0L356.7 474.5L356.9 474.5L357.1 474.5L357.4 474.5L357.6 484.5L357.8 412.0L358.1 484.5L358.3 443.3L358.5 474.5L358.8 443.3L359.0 474.5L359.3 443.3L359.5 484.5L359.7 474.5L360.0 484.5L360.2 474.5L360.4 443.3L360.7 484.5L360.9 412.0L361.1 443.3L361.4 443.3L361.6 474.5L361.8 474.5L362.1 474.5L362.3 412.0L362.6 474.5L362.8 474.5L363.0 484.5L363.3 443.3L363.5 484.5L363.7 425.0L364.0 425.0L364.2 474.5L364.4 425.0L364.7 474.5L364.9 474.5L365.1 484.5L365.4 443.3L365.6 474.5L365.8 474.5L366.1 474.5L366.3 425.0L366.6 474.5L366.8 443.3L367.0 474.5L367.3 443.3L367.5 443.3L367.7 484.5L368.0 402.0L368.2 474.5L368.4 443.3L368.7 484.5L368.9 474.5L369.1 484.5L369.4 474.5L369.6 443.3L369.8 474.5L370.1 474.5L370.3 484.5L370.6 443.3L370.8 484.5L371.0 443.3L371.3 474.5L371.5 425.0L371.7 425.0L372.0 443.3L372.2 443.3L372.4 484.5L372.7 412.0L372.9 443.3L373.1 412.0L373.4 443.3L373.6 474.5L373.8 443.3L374.1 402.0L374.3 425.0L374.6 484.5L374.8 412.0L375.0 425.0L375.3 484.5L375.5 425.0L375.7 484.5L376.0 474.5L376.2 474.5L376.4 474.5L376.7 474.5L376.9 474.5L377.1 443.3L377.4 474.5L377.6 443.3L377.8 425.0L378.1 474.5L378.3 484.5L378.6 443.3L378.8 425.0L379.0 443.3L379.3 474.5L379.5 474.5L379.7 443.3L380.0 474.5L380.2 443.3L380.4 402.0L380.7 425.0L380.9 484.5L381.1 425.0L381.4 474.5L381.6 474.5L381.8 474.5L382.1 474.5L382.3 474.5L382.6 484.5L382.8 443.3L383.0 484.5L383.3 474.5L383.5 443.3L383.7 412.0L384.0 474.5L384.2 425.0L384.4 474.5L384.7 443.3L384.9 474.5L385.1 484.5L385.4 443.3L385.6 484.5L385.8 484.5L386.1 474.5L386.3 484.5L386.6 484.5L386.8 412.0L387.0 484.5L387.3 443.3L387.5 412.0L387.7 484.5L388.0 474.5L388.2 484.5L388.4 484.5L388.7 474.5L388.9 474.5L389.1 474.5L389.4 425.0L389.6 412.0L389.8 425.0L390.1 474.5L390.3 425.0L390.6 484.5L390.8 484.5L391.0 484.5L391.3 484.5L391.5 474.5L391.7 443.3L392.0 425.0L392.2 412.0L392.4 425.0L392.7 443.3L392.9 474.5L393.1 443.3L393.4 474.5L393.6 425.0L393.8 474.5L394.1 484.5L394.3 484.5L394.6 425.0L394.8 425.0L395.0 474.5L395.3 425.0L395.5 484.5L395.7 484.5L396.0 412.0L396.2 484.5L396.4 474.5L396.7 484.5L396.9 425.0L397.1 412.0L397.4 474.5L397.6 443.3L397.9 443.3L398.1 412.0L398.3 474.5L398.6 484.5L398.8 425.0L399.0 412.0L399.3 474.5L399.5 484.5L399.7 412.0L400.0 443.3L400.2 484.5L400.4 484.5L400.7 484.5L400.9 443.3L401.1 474.5L401.4 425.0L401.6 474.5L401.9 425.0L402.1 412.0L402.3 484.5L402.6 443.3L402.8 443.3L403.0 443.3L403.3 443.3L403.5 474.5L403.7 443.3L404.0 484.5L404.2 443.3L404.4 443.3L404.7 484.5L404.9 443.3L405.1 443.3L405.4 484.5L405.6 443.3L405.9 474.5L406.1 484.5L406.3 443.3L406.6 402.0L406.8 443.3L407.0 443.3L407.3 484.5L407.5 484.5L407.7 425.0L408.0 474.5L408.2 484.5L408.4 425.0L408.7 443.3L408.9 443.3L409.1 425.0L409.4 425.0L409.6 443.3L409.9 412.0L410.1 474.5L410.3 412.0L410.6 443.3L410.8 474.5L411.0 425.0L411.3 443.3L411.5 474.5L411.7 474.5L412.0 425.0L412.2 484.5L412.4 425.0L412.7 484.5L412.9 443.3L413.1 443.3L413.4 443.3L413.6 425.0L413.9 484.5L414.1 484.5L414.3 484.5L414.6 474.5L414.8 484.5L415.0 474.5L415.3 484.5L415.5 484.5L415.7 443.3L416.0 484.5L416.2 484.5L416.4 402.0L416.7 443.3L416.9 425.0L417.1 402.0L417.4 443.3L417.6 425.0L417.9 425.0L418.1 474.5L418.3 484.5L418.6 443.3L418.8 474.5L419.0 443.3L419.3 412.0L419.5 443.3L419.7 484.5L420.0 474.5L420.2 412.0L420.4 443.3L420.7 402.0L420.9 474.5L421.1 484.5L421.4 443.3L421.6 484.5L421.9 474.5L422.1 425.0L422.3 443.3L422.6 425.0L422.8 425.0L423.0 474.5L423.3 412.0L423.5 474.5L423.7 484.5L424.0 443.3L424.2 484.5L424.4 484.5L424.7 443.3L424.9 474.5L425.1 484.5L425.4 474.5L425.6 443.3L425.9 474.5L426.1 443.3L426.3 474.5L426.6 484.5L426.8 425.0L427.0 425.0L427.3 474.5L427.5 443.3L427.7 443.3L428.0 443.3L428.2 443.3L428.4 474.5L428.7 412.0L428.9 474.5L429.2 484.5L429.4 402.0L429.6 425.0L429.9 474.5L430.1 474.5L430.3 484.5L430.6 484.5L430.8 474.5L431.0 484.5L431.3 484.5L431.5 474.5L431.7 474.5L432.0 484.5L432.2 484.5L432.4 402.0L432.7 425.0L432.9 393.8L433.2 474.5L433.4 474.5L433.6 474.5L433.9 443.3L434.1 484.5L434.3 412.0L434.6 474.5L434.8 443.3L435.0 474.5L435.3 443.3L435.5 474.5L435.7 425.0L436.0 443.3L436.2 474.5L436.4 484.5L436.7 484.5L436.9 484.5L437.2 484.5L437.4 474.5L437.6 443.3L437.9 425.0L438.1 443.3L438.3 425.0L438.6 443.3L438.8 443.3L439.0 425.0L439.3 484.5L439.5 474.5L439.7 474.5L440.0 443.3L440.2 474.5L440.4 443.3L440.7 425.0L440.9 425.0L441.2 425.0L441.4 474.5L441.6 425.0L441.9 474.5L442.1 443.3L442.3 443.3L442.6 425.0L442.8 425.0L443.0 412.0L443.3 484.5L443.5 474.5L443.7 484.5L444.0 412.0L444.2 474.5L444.4 484.5L444.7 412.0L444.9 443.3L445.2 484.5L445.4 425.0L445.6 474.5L445.9 443.3L446.1 484.5L446.3 412.0L446.6 474.5L446.8 443.3L447.0 474.5L447.3 484.5L447.5 443.3L447.7 443.3L448.0 474.5L448.2 474.5L448.4 443.3L448.7 484.5L448.9 412.0" stroke="#ff0000" stroke-width="1" fill="none" stroke-linejoin="bevel" shape-rendering="crispEdges"/><path d="M58.5 412.0L58.7 474.5L59.0 412.0L59.2 443.3L59.4 402.0L59.7 443.3L59.9 484.5L60.1 402.0L60.4 474.5L60.6 443.3L60.9 474.5L61.1 443.3L61.3 402.0L61.6 412.0L61.8 484.5L62.0 443.3L62.3 393.8L62.5 443.3L62.7 474.5L63.0 425.0L63.2 402.0L63.4 443.3L63.7 412.0L63.9 425.0L64.1 484.5L64.4 412.0L64.6 484.5L64.9 474.5L65.1 425.0L65.3 402.0L65.6 425.0L65.8 474.5L66.0 425.0L66.3 474.5L66.5 412.0L66.7 443.3L67.0 412.0L67.2 386.8L67.4 412.0L67.7 425.0L67.9 393.8L68.1 474.5L68.4 425.0L68.6 412.0L68.9 412.0L69.1 474.5L69.3 425.0L69.6 402.0L69.8 484.5L70.0 484.5L70.3 443.3L70.5 474.5L70.7 425.0L71.0 402.0L71.2 443.3L71.4 425.0L71.7 443.3L71.9 402.0L72.1 412.0L72.4 474.5L72.6 393.8L72.9 443.3L73.1 412.0L73.3 425.0L73.6 474.5L73.8 412.0L74.0 443.3L74.3 443.3L74.5 443.3L74.7 425.0L75.0 393.8L75.2 370.8L75.4 366.5L75.7 366.5L75.9 339.5L76.1 319.8L76.4 321.2L76.6 322.8L76.9 324.4L77.1 301.0L77.3 274.9L77.6 224.8L77.8 173.8L78.0 136.5L78.3 105.8L78.5 84.2L78.7 70.3L79.0 60.7L79.2 53.1L79.4 49.6L79.7 46.4L79.9 43.9L80.2 42.8L80.4 41.7L80.6 41.5L80.9 40.6L81.1 40.3L81.3 39.7L81.6 40.5L81.8 41.1L82.0 40.9L82.3 41.6L82.5 41.6L82.7 41.8L83.0 42.4L83.2 42.9L83.4 43.3L83.7 43.5L83.9 44.8L84.2 44.1L84.4 45.4L84.6 45.2L84.9 46.6L85.1 47.7L85.3 47.5L85.6 47.7L85.8 48.2L86.0 48.6L86.3 49.3L86.5 50.5L86.7 51.1L87.0 51.1L87.2 50.9L87.4 52.2L87.7 52.4L87.9 52.9L88.2 53.7L88.4 54.4L88.6 54.7L88.9 55.6L89.1 56.4L89.3 56.1L89.6 56.7L89.8 56.5L90.0 58.2L90.3 58.6L90.5 59.9L90.7 59.6L91.0 61.4L91.2 60.6L91.4 62.1L91.7 62.2L91.9 61.8L92.2 63.0L92.4 63.2L92.6 63.5L92.9 64.4L93.1 64.8L93.3 65.7L93.6 66.3L93.8 66.8L94.0 66.8L94.3 68.0L94.5 68.4L94.7 68.3L95.0 69.0L95.2 70.0L95.4 70.3L95.7 70.7L95.9 71.3L96.2 72.5L96.4 72.8L96.6 73.1L96.9 73.5L97.1 73.4L97.3 75.0L97.6 75.2L97.8 76.7L98.0 76.6L98.3 77.3L98.5 76.8L98.7 77.9L99.0 78.5L99.2 78.9L99.4 79.8L99.7 79.5L99.9 80.1L100.2 81.2L100.4 81.3L100.6 81.9L100.9 82.4L101.1 83.2L101.3 83.5L101.6 82.7L101.8 85.2L102.0 86.5L102.3 85.4L102.5 87.0L102.7 87.3L103.0 87.5L103.2 87.7L103.4 88.0L103.7 89.4L103.9 89.7L104.2 90.9L104.4 90.4L104.6 92.0L104.9 92.5L105.1 93.0L105.3 92.2L105.6 93.1L105.8 94.0L106.0 95.2L106.3 94.0L106.5 97.0L106.7 95.8L107.0 95.6L107.2 97.5L107.4 96.9L107.7 97.8L107.9 98.6L108.2 99.0L108.4 99.7L108.6 99.8L108.9 101.0L109.1 100.8L109.3 103.2L109.6 103.2L109.8 103.1L110.0 104.0L110.3 103.6L110.5 104.8L110.7 104.4L111.0 106.6L111.2 105.8L111.5 107.2L111.7 107.8L111.9 108.8L112.2 109.4L112.4 107.9L112.6 109.9L112.9 109.7L113.1 110.1L113.3 110.0L113.6 110.9L113.8 111.5L114.0 112.0L114.3 113.4L114.5 114.4L114.7 114.7L115.0 113.7L115.2 115.8L115.5 117.3L115.7 116.9L115.9 118.6L116.2 118.1L116.4 116.4L116.6 118.3L116.9 120.6L117.1 118.3L117.3 119.2L117.6 120.3L117.8 120.0L118.0 121.6L118.3 121.5L118.5 123.4L118.7 123.3L119.0 126.2L119.2 125.4L119.5 124.7L119.7 125.2L119.9 126.4L120.2 125.7L120.4 126.1L120.6 128.4L120.9 128.1L121.1 128.3L121.3 130.4L121.6 129.0L121.8 130.9L122.0 130.6L122.3 131.1L122.5 133.3L122.7 133.4L123.0 131.2L123.2 133.9L123.5 134.0L123.7 136.4L123.9 135.0L124.2 134.8L124.4 137.4L124.6 138.1L124.9 137.7L125.1 138.9L125.3 137.7L125.6 139.9L125.8 140.0L126.0 140.8L126.3 140.4L126.5 140.6L126.7 140.5L127.0 142.2L127.2 142.8L127.5 141.1L127.7 142.7L127.9 145.5L128.2 144.3L128.4 146.5L128.6 145.7L128.9 147.8L129.1 148.5L129.3 147.9L129.6 147.4L129.8 148.1L130.0 148.6L130.3 150.8L130.5 150.2L130.7 151.3L131.0 151.5L131.2 151.8L131.5 151.1L131.7 152.8L131.9 153.4L132.2 156.3L132.4 154.0L132.6 153.5L132.9 156.3L133.1 156.6L133.3 156.8L133.6 156.3L133.8 159.4L134.0 156.9L134.3 157.9L134.5 159.4L134.7 160.5L135.0 159.6L135.2 162.2L135.5 163.6L135.7 163.0L135.9 163.1L136.2 166.4L136.4 162.8L136.6 164.5L136.9 164.1L137.1 166.2L137.3 168.1L137.6 163.3L137.8 167.8L138.0 166.4L138.3 168.3L138.5 169.4L138.7 170.6L139.0 171.5L139.2 167.4L139.5 170.9L139.7 169.3L139.9 171.1L140.2 174.2L140.4 171.9L140.6 171.2L140.9 173.3L141.1 171.6L141.3 176.6L141.6 173.4L141.8 175.7L142.0 174.0L142.3 177.5L142.5 178.7L142.7 177.6L143.0 175.7L143.2 179.8L143.5 179.2L143.7 179.4L143.9 180.2L144.2 181.2L144.4 177.6L144.6 184.0L144.9 180.5L145.1 181.8L145.3 185.2L145.6 185.8L145.8 188.5L146.0 184.2L146.3 187.0L146.5 186.0L146.8 186.6L147.0 186.3L147.2 187.8L147.5 186.0L147.7 187.0L147.9 188.1L148.2 189.3L148.4 190.2L148.6 191.8L148.9 192.9L149.1 195.1L149.3 189.8L149.6 194.9L149.8 190.9L150.0 194.0L150.3 194.6L150.5 197.9L150.8 198.3L151.0 197.8L151.2 198.9L151.5 197.8L151.7 199.8L151.9 199.7L152.2 199.1L152.4 201.1L152.6 201.2L152.9 201.2L153.1 198.2L153.3 205.1L153.6 204.1L153.8 202.8L154.0 204.3L154.3 201.5L154.5 203.8L154.8 204.4L155.0 205.8L155.2 206.5L155.5 209.7L155.7 205.0L155.9 205.9L156.2 208.5L156.4 211.1L156.6 207.4L156.9 206.5L157.1 210.3L157.3 206.6L157.6 209.7L157.8 210.9L158.0 212.1L158.3 212.4L158.5 214.2L158.8 213.1L159.0 209.7L159.2 214.3L159.5 216.3L159.7 219.5L159.9 215.3L160.2 214.7L160.4 213.8L160.6 221.7L160.9 218.9L161.1 218.9L161.3 219.2L161.6 216.9L161.8 220.0L162.0 221.4L162.3 226.1L162.5 221.6L162.8 220.3L163.0 229.5L163.2 226.6L163.5 225.9L163.7 223.8L163.9 226.6L164.2 225.5L164.4 224.1L164.6 228.9L164.9 227.7L165.1 227.2L165.3 229.1L165.6 228.3L165.8 223.3L166.0 230.9L166.3 226.6L166.5 231.5L166.8 231.9L167.0 234.2L167.2 229.5L167.5 229.9L167.7 233.8L167.9 231.7L168.2 236.9L168.4 231.1L168.6 240.5L168.9 239.0L169.1 235.8L169.3 234.4L169.6 238.3L169.8 238.6L170.0 240.0L170.3 239.0L170.5 234.4L170.8 243.9L171.0 239.0L171.2 236.9L171.5 236.0L171.7 250.3L171.9 241.0L172.2 240.0L172.4 249.9L172.6 249.6L172.9 245.3L173.1 240.5L173.3 248.4L173.6 241.3L173.8 246.4L174.0 245.5L174.3 254.8L174.5 258.4L174.8 247.0L175.0 249.0L175.2 253.8L175.5 256.6L175.7 255.9L175.9 251.8L176.2 245.8L176.4 255.2L176.6 258.0L176.9 254.2L177.1 256.2L177.3 255.9L177.6 257.7L177.8 259.2L178.0 261.9L178.3 259.9L178.5 253.5L178.8 256.9L179.0 260.7L179.2 260.3L179.5 250.6L179.7 256.9L179.9 255.9L180.2 259.2L180.4 261.9L180.6 267.0L180.9 259.5L181.1 261.5L181.3 262.3L181.6 262.7L181.8 264.0L182.0 269.8L182.3 267.0L182.5 268.8L182.8 267.0L183.0 260.7L183.2 271.7L183.5 270.8L183.7 269.8L183.9 267.5L184.2 267.9L184.4 268.4L184.6 270.3L184.9 271.2L185.1 272.8L185.3 274.9L185.6 271.2L185.8 276.5L186.1 272.8L186.3 268.4L186.5 277.6L186.8 283.7L187.0 280.6L187.2 272.8L187.5 276.5L187.7 281.8L187.9 274.9L188.2 282.4L188.4 275.9L188.6 285.0L188.9 278.8L189.1 284.4L189.3 282.4L189.6 287.1L189.8 280.0L190.1 289.3L190.3 280.0L190.5 293.9L190.8 290.0L191.0 279.4L191.2 292.3L191.5 282.4L191.7 283.7L191.9 290.8L192.2 287.8L192.4 291.5L192.6 289.3L192.9 290.8L193.1 287.1L193.3 290.8L193.6 293.1L193.8 303.0L194.1 285.0L194.3 287.1L194.5 295.6L194.8 300.1L195.0 297.3L195.2 283.7L195.5 292.3L195.7 302.0L195.9 306.1L196.2 298.2L196.4 293.1L196.6 296.5L196.9 301.0L197.1 309.4L197.3 300.1L197.6 295.6L197.8 294.8L198.1 300.1L198.3 295.6L198.5 302.0L198.8 313.0L199.0 298.2L199.2 299.1L199.5 306.1L199.7 308.3L199.9 299.1L200.2 310.6L200.4 302.0L200.6 302.0L200.9 314.3L201.1 311.8L201.3 306.1L201.6 311.8L201.8 300.1L202.1 317.0L202.3 319.8L202.5 326.0L202.8 304.0L203.0 327.7L203.2 308.3L203.5 313.0L203.7 295.6L203.9 308.3L204.2 329.5L204.4 333.2L204.6 322.8L204.9 319.8L205.1 308.3L205.3 329.5L205.6 315.6L205.8 322.8L206.1 309.4L206.3 322.8L206.5 309.4L206.8 310.6L207.0 326.0L207.2 324.4L207.5 311.8L207.7 331.3L207.9 322.8L208.2 317.0L208.4 329.5L208.6 329.5L208.9 327.7L209.1 318.3L209.3 314.3L209.6 322.8L209.8 315.6L210.1 326.0L210.3 335.2L210.5 331.3L210.8 329.5L211.0 333.2L211.2 333.2L211.5 326.0L211.7 339.5L211.9 329.5L212.2 324.4L212.4 321.2L212.6 326.0L212.9 344.3L213.1 339.5L213.3 346.8L213.6 326.0L213.8 346.8L214.1 324.4L214.3 344.3L214.5 335.2L214.8 333.2L215.0 331.3L215.2 331.3L215.5 331.3L215.7 331.3L215.9 319.8L216.2 346.8L216.4 337.3L216.6 346.8L216.9 344.3L217.1 341.8L217.3 341.8L217.6 346.8L217.8 346.8L218.1 355.6L218.3 346.8L218.5 337.3L218.8 335.2L219.0 344.3L219.2 346.8L219.5 333.2L219.7 352.5L219.9 380.8L220.2 341.8L220.4 335.2L220.6 339.5L220.9 333.2L221.1 358.9L221.4 344.3L221.6 349.6L221.8 349.6L222.1 349.6L222.3 352.5L222.5 358.9L222.8 362.5L223.0 370.8L223.2 349.6L223.5 362.5L223.7 352.5L223.9 355.6L224.2 355.6L224.4 333.2L224.6 366.5L224.9 352.5L225.1 335.2L225.4 352.5L225.6 341.8L225.8 358.9L226.1 337.3L226.3 344.3L226.5 370.8L226.8 358.9L227.0 362.5L227.2 346.8L227.5 355.6L227.7 366.5L227.9 346.8L228.2 375.5L228.4 366.5L228.6 412.0L228.9 349.6L229.1 344.3L229.4 380.8L229.6 362.5L229.8 370.8L230.1 375.5L230.3 349.6L230.5 358.9L230.8 375.5L231.0 339.5L231.2 375.5L231.5 366.5L231.7 402.0L231.9 358.9L232.2 380.8L232.4 358.9L232.6 370.8L232.9 375.5L233.1 358.9L233.4 352.5L233.6 358.9L233.8 380.8L234.1 366.5L234.3 366.5L234.5 370.8L234.8 370.8L235.0 355.6L235.2 349.6L235.5 375.5L235.7 355.6L235.9 362.5L236.2 393.8L236.4 346.8L236.6 402.0L236.9 380.8L237.1 362.5L237.4 366.5L237.6 402.0L237.8 402.0L238.1 380.8L238.3 402.0L238.5 386.8L238.8 375.5L239.0 412.0L239.2 380.8L239.5 366.5L239.7 380.8L239.9 370.8L240.2 386.8L240.4 386.8L240.6 375.5L240.9 366.5L241.1 362.5L241.4 380.8L241.6 352.5L241.8 380.8L242.1 412.0L242.3 380.8L242.5 375.5L242.8 386.8L243.0 402.0L243.2 355.6L243.5 393.8L243.7 375.5L243.9 380.8L244.2 443.3L244.4 393.8L244.6 370.8L244.9 402.0L245.1 402.0L245.4 380.8L245.6 412.0L245.8 370.8L246.1 443.3L246.3 366.5L246.5 412.0L246.8 386.8L247.0 386.8L247.2 443.3L247.5 358.9L247.7 412.0L247.9 380.8L248.2 366.5L248.4 380.8L248.6 402.0L248.9 380.8L249.1 375.5L249.4 366.5L249.6 402.0L249.8 425.0L250.1 386.8L250.3 380.8L250.5 412.0L250.8 380.8L251.0 425.0L251.2 370.8L251.5 386.8L251.7 402.0L251.9 375.5L252.2 484.5L252.4 425.0L252.7 380.8L252.9 393.8L253.1 393.8L253.4 380.8L253.6 370.8L253.8 402.0L254.1 443.3L254.3 386.8L254.5 402.0L254.8 386.8L255.0 412.0L255.2 443.3L255.5 412.0L255.7 393.8L255.9 402.0L256.2 425.0L256.4 386.8L256.7 474.5L256.9 393.8L257.1 443.3L257.4 386.8L257.6 386.8L257.8 443.3L258.1 412.0L258.3 386.8L258.5 425.0L258.8 393.8L259.0 366.5L259.2 393.8L259.5 393.8L259.7 402.0L259.9 474.5L260.2 412.0L260.4 443.3L260.7 393.8L260.9 380.8L261.1 402.0L261.4 393.8L261.6 425.0L261.8 412.0L262.1 386.8L262.3 425.0L262.5 412.0L262.8 425.0L263.0 380.8L263.2 412.0L263.5 402.0L263.7 386.8L263.9 380.8L264.2 443.3L264.4 443.3L264.7 402.0L264.9 474.5L265.1 412.0L265.4 425.0L265.6 425.0L265.8 412.0L266.1 393.8L266.3 402.0L266.5 393.8L266.8 402.0L267.0 443.3L267.2 425.0L267.5 375.5L267.7 474.5L267.9 402.0L268.2 402.0L268.4 484.5L268.7 412.0L268.9 393.8L269.1 412.0L269.4 412.0L269.6 425.0L269.8 443.3L270.1 425.0L270.3 402.0L270.5 443.3L270.8 425.0L271.0 402.0L271.2 393.8L271.5 380.8L271.7 443.3L271.9 402.0L272.2 412.0L272.4 412.0L272.7 425.0L272.9 443.3L273.1 412.0L273.4 425.0L273.6 380.8L273.8 393.8L274.1 425.0L274.3 393.8L274.5 425.0L274.8 402.0L275.0 402.0L275.2 393.8L275.5 484.5L275.7 443.3L275.9 474.5L276.2 393.8L276.4 443.3L276.7 412.0L276.9 425.0L277.1 402.0L277.4 443.3L277.6 402.0L277.8 474.5L278.1 474.5L278.3 443.3L278.5 443.3L278.8 402.0L279.0 425.0L279.2 412.0L279.5 425.0L279.7 393.8L279.9 425.0L280.2 443.3L280.4 443.3L280.7 474.5L280.9 425.0L281.1 402.0L281.4 393.8L281.6 425.0L281.8 386.8L282.1 474.5L282.3 402.0L282.5 402.0L282.8 443.3L283.0 443.3L283.2 393.8L283.5 474.5L283.7 443.3L283.9 393.8L284.2 474.5L284.4 484.5L284.7 412.0L284.9 425.0L285.1 380.8L285.4 474.5L285.6 484.5L285.8 425.0L286.1 402.0L286.3 425.0L286.5 412.0L286.8 412.0L287.0 443.3L287.2 402.0L287.5 443.3L287.7 425.0L288.0 443.3L288.2 425.0L288.4 425.0L288.7 412.0L288.9 402.0L289.1 425.0L289.4 393.8L289.6 443.3L289.8 425.0L290.1 393.8L290.3 443.3L290.5 386.8L290.8 375.5L291.0 425.0L291.2 484.5L291.5 402.0L291.7 474.5L292.0 412.0L292.2 425.0L292.4 425.0L292.7 412.0L292.9 443.3L293.1 443.3L293.4 443.3L293.6 386.8L293.8 393.8L294.1 402.0L294.3 474.5L294.5 425.0L294.8 402.0L295.0 425.0L295.2 425.0L295.5 443.3L295.7 402.0L296.0 443.3L296.2 425.0L296.4 425.0L296.7 443.3L296.9 443.3L297.1 443.3L297.4 443.3L297.6 393.8L297.8 412.0L298.1 443.3L298.3 443.3L298.5 425.0L298.8 425.0L299.0 412.0L299.2 474.5L299.5 425.0L299.7 443.3L300.0 484.5L300.2 425.0L300.4 425.0L300.7 425.0L300.9 443.3L301.1 402.0L301.4 425.0L301.6 425.0L301.8 375.5L302.1 443.3L302.3 425.0L302.5 474.5L302.8 443.3L303.0 443.3L303.2 474.5L303.5 425.0L303.7 393.8L304.0 412.0L304.2 425.0L304.4 412.0L304.7 425.0L304.9 386.8L305.1 412.0L305.4 425.0L305.6 443.3L305.8 412.0L306.1 425.0L306.3 474.5L306.5 443.3L306.8 425.0L307.0 425.0L307.2 412.0L307.5 443.3L307.7 425.0L308.0 402.0L308.2 386.8L308.4 443.3L308.7 425.0L308.9 443.3L309.1 412.0L309.4 443.3L309.6 412.0L309.8 474.5L310.1 474.5L310.3 443.3L310.5 443.3L310.8 474.5L311.0 425.0L311.2 474.5L311.5 412.0L311.7 425.0L312.0 443.3L312.2 425.0L312.4 443.3L312.7 425.0L312.9 412.0L313.1 443.3L313.4 402.0L313.6 425.0L313.8 380.8L314.1 386.8L314.3 484.5L314.5 443.3L314.8 474.5L315.0 393.8L315.2 443.3L315.5 443.3L315.7 474.5L316.0 443.3L316.2 443.3L316.4 443.3L316.7 412.0L316.9 425.0L317.1 443.3L317.4 412.0L317.6 402.0L317.8 443.3L318.1 425.0L318.3 474.5L318.5 474.5L318.8 474.5L319.0 443.3L319.2 425.0L319.5 474.5L319.7 474.5L320.0 412.0L320.2 425.0L320.4 474.5L320.7 474.5L320.9 425.0L321.1 412.0L321.4 443.3L321.6 474.5L321.8 474.5L322.1 393.8L322.3 412.0L322.5 474.5L322.8 474.5L323.0 474.5L323.2 484.5L323.5 484.5L323.7 443.3L324.0 474.5L324.2 425.0L324.4 443.3L324.7 443.3L324.9 474.5L325.1 402.0L325.4 484.5L325.6 443.3L325.8 402.0L326.1 425.0L326.3 443.3L326.5 402.0L326.8 412.0L327.0 425.0L327.3 425.0L327.5 425.0L327.7 425.0L328.0 443.3L328.2 443.3L328.4 412.0L328.7 443.3L328.9 425.0L329.1 412.0L329.4 412.0L329.6 443.3L329.8 443.3L330.1 443.3L330.3 443.3L330.5 393.8L330.8 443.3L331.0 474.5L331.3 443.3L331.5 425.0L331.7 402.0L332.0 443.3L332.2 484.5L332.4 474.5L332.7 412.0L332.9 474.5L333.1 425.0L333.4 443.3L333.6 393.8L333.8 412.0L334.1 425.0L334.3 474.5L334.5 443.3L334.8 484.5L335.0 443.3L335.3 474.5L335.5 484.5L335.7 425.0L336.0 412.0L336.2 474.5L336.4 474.5L336.7 443.3L336.9 443.3L337.1 443.3L337.4 425.0L337.6 412.0L337.8 443.3L338.1 425.0L338.3 393.8L338.5 474.5L338.8 474.5L339.0 412.0L339.3 443.3L339.5 443.3L339.7 425.0L340.0 443.3L340.2 484.5L340.4 393.8L340.7 443.3L340.9 474.5L341.1 474.5L341.4 443.3L341.6 484.5L341.8 443.3L342.1 443.3L342.3 412.0L342.5 474.5L342.8 402.0L343.0 425.0L343.3 425.0L343.5 412.0L343.7 443.3L344.0 474.5L344.2 474.5L344.4 474.5L344.7 402.0L344.9 425.0L345.1 484.5L345.4 412.0L345.6 443.3L345.8 474.5L346.1 474.5L346.3 443.3L346.5 412.0L346.8 425.0L347.0 443.3L347.3 402.0L347.5 425.0L347.7 443.3L348.0 425.0L348.2 412.0L348.4 425.0L348.7 425.0L348.9 425.0L349.1 425.0L349.4 443.3L349.6 402.0L349.8 402.0L350.1 412.0L350.3 443.3L350.5 412.0L350.8 443.3L351.0 443.3L351.3 412.0L351.5 412.0L351.7 474.5L352.0 425.0L352.2 474.5L352.4 474.5L352.7 484.5L352.9 412.0L353.1 474.5L353.4 474.5L353.6 393.8L353.8 474.5L354.1 443.3L354.3 425.0L354.5 393.8L354.8 474.5L355.0 474.5L355.3 474.5L355.5 412.0L355.7 484.5L356.0 425.0L356.2 484.5L356.4 402.0L356.7 474.5L356.9 443.3L357.1 443.3L357.4 443.3L357.6 443.3L357.8 484.5L358.1 474.5L358.3 443.3L358.5 402.0L358.8 425.0L359.0 474.5L359.3 425.0L359.5 412.0L359.7 425.0L360.0 443.3L360.2 425.0L360.4 443.3L360.7 425.0L360.9 474.5L361.1 443.3L361.4 474.5L361.6 474.5L361.8 425.0L362.1 443.3L362.3 443.3L362.6 412.0L362.8 443.3L363.0 474.5L363.3 484.5L363.5 393.8L363.7 443.3L364.0 443.3L364.2 425.0L364.4 443.3L364.7 443.3L364.9 425.0L365.1 412.0L365.4 425.0L365.6 425.0L365.8 402.0L366.1 443.3L366.3 443.3L366.6 402.0L366.8 412.0L367.0 474.5L367.3 402.0L367.5 402.0L367.7 402.0L368.0 412.0L368.2 484.5L368.4 412.0L368.7 412.0L368.9 425.0L369.1 393.8L369.4 443.3L369.6 412.0L369.8 402.0L370.1 474.5L370.3 474.5L370.6 386.8L370.8 402.0L371.0 425.0L371.3 484.5L371.5 484.5L371.7 443.3L372.0 484.5L372.2 474.5L372.4 474.5L372.7 412.0L372.9 425.0L373.1 425.0L373.4 474.5L373.6 425.0L373.8 443.3L374.1 412.0L374.3 474.5L374.6 425.0L374.8 412.0L375.0 443.3L375.3 425.0L375.5 474.5L375.7 443.3L376.0 425.0L376.2 425.0L376.4 412.0L376.7 474.5L376.9 425.0L377.1 412.0L377.4 484.5L377.6 474.5L377.8 443.3L378.1 443.3L378.3 443.3L378.6 443.3L378.8 425.0L379.0 443.3L379.3 412.0L379.5 474.5L379.7 402.0L380.0 484.5L380.2 386.8L380.4 425.0L380.7 443.3L380.9 412.0L381.1 443.3L381.4 425.0L381.6 402.0L381.8 425.0L382.1 412.0L382.3 402.0L382.6 402.0L382.8 386.8L383.0 474.5L383.3 474.5L383.5 425.0L383.7 443.3L384.0 443.3L384.2 402.0L384.4 412.0L384.7 425.0L384.9 402.0L385.1 412.0L385.4 443.3L385.6 412.0L385.8 443.3L386.1 474.5L386.3 474.5L386.6 412.0L386.8 474.5L387.0 425.0L387.3 393.8L387.5 425.0L387.7 412.0L388.0 425.0L388.2 474.5L388.4 443.3L388.7 412.0L388.9 425.0L389.1 386.8L389.4 474.5L389.6 402.0L389.8 443.3L390.1 425.0L390.3 402.0L390.6 425.0L390.8 484.5L391.0 412.0L391.3 425.0L391.5 443.3L391.7 443.3L392.0 402.0L392.2 425.0L392.4 412.0L392.7 484.5L392.9 484.5L393.1 412.0L393.4 412.0L393.6 425.0L393.8 474.5L394.1 402.0L394.3 412.0L394.6 375.5L394.8 474.5L395.0 402.0L395.3 425.0L395.5 443.3L395.7 425.0L396.0 443.3L396.2 412.0L396.4 443.3L396.7 425.0L396.9 412.0L397.1 425.0L397.4 425.0L397.6 443.3L397.9 443.3L398.1 402.0L398.3 443.3L398.6 425.0L398.8 393.8L399.0 443.3L399.3 443.3L399.5 474.5L399.7 443.3L400.0 443.3L400.2 443.3L400.4 443.3L400.7 443.3L400.9 474.5L401.1 443.3L401.4 484.5L401.6 474.5L401.9 412.0L402.1 393.8L402.3 443.3L402.6 474.5L402.8 425.0L403.0 443.3L403.3 443.3L403.5 474.5L403.7 443.3L404.0 402.0L404.2 443.3L404.4 484.5L404.7 412.0L404.9 443.3L405.1 484.5L405.4 443.3L405.6 393.8L405.9 474.5L406.1 425.0L406.3 425.0L406.6 443.3L406.8 402.0L407.0 474.5L407.3 474.5L407.5 443.3L407.7 425.0L408.0 474.5L408.2 425.0L408.4 484.5L408.7 474.5L408.9 412.0L409.1 402.0L409.4 474.5L409.6 412.0L409.9 474.5L410.1 402.0L410.3 425.0L410.6 474.5L410.8 412.0L411.0 402.0L411.3 443.3L411.5 402.0L411.7 425.0L412.0 425.0L412.2 443.3L412.4 425.0L412.7 412.0L412.9 443.3L413.1 443.3L413.4 402.0L413.6 386.8L413.9 412.0L414.1 474.5L414.3 380.8L414.6 393.8L414.8 484.5L415.0 474.5L415.3 425.0L415.5 402.0L415.7 443.3L416.0 425.0L416.2 402.0L416.4 443.3L416.7 443.3L416.9 443.3L417.1 425.0L417.4 443.3L417.6 443.3L417.9 443.3L418.1 443.3L418.3 412.0L418.6 443.3L418.8 474.5L419.0 412.0L419.3 402.0L419.5 443.3L419.7 443.3L420.0 402.0L420.2 474.5L420.4 443.3L420.7 474.5L420.9 443.3L421.1 425.0L421.4 425.0L421.6 402.0L421.9 474.5L422.1 402.0L422.3 474.5L422.6 474.5L422.8 474.5L423.0 412.0L423.3 443.3L423.5 402.0L423.7 443.3L424.0 474.5L424.2 474.5L424.4 412.0L424.7 386.8L424.9 474.5L425.1 425.0L425.4 425.0L425.6 484.5L425.9 443.3L426.1 474.5L426.3 484.5L426.6 474.5L426.8 412.0L427.0 474.5L427.3 412.0L427.5 402.0L427.7 474.5L428.0 412.0L428.2 474.5L428.4 443.3L428.7 412.0L428.9 425.0L429.2 443.3L429.4 443.3L429.6 443.3L429.9 443.3L430.1 412.0L430.3 425.0L430.6 484.5L430.8 443.3L431.0 402.0L431.3 474.5L431.5 425.0L431.7 443.3L432.0 484.5L432.2 443.3L432.4 443.3L432.7 443.3L432.9 412.0L433.2 425.0L433.4 425.0L433.6 484.5L433.9 425.0L434.1 425.0L434.3 443.3L434.6 412.0L434.8 484.5L435.0 474.5L435.3 412.0L435.5 484.5L435.7 443.3L436.0 484.5L436.2 425.0L436.4 402.0L436.7 393.8L436.9 474.5L437.2 412.0L437.4 402.0L437.6 474.5L437.9 393.8L438.1 402.0L438.3 386.8L438.6 443.3L438.8 412.0L439.0 484.5L439.3 425.0L439.5 386.8L439.7 474.5L440.0 484.5L440.2 474.5L440.4 412.0L440.7 425.0L440.9 425.0L441.2 443.3L441.4 443.3L441.6 425.0L441.9 443.3L442.1 425.0L442.3 425.0L442.6 474.5L442.8 474.5L443.0 425.0L443.3 402.0L443.5 443.3L443.7 474.5L444.0 412.0L444.2 474.5L444.4 474.5L444.7 443.3L444.9 425.0L445.2 412.0L445.4 425.0L445.6 412.0L445.9 425.0L446.1 443.3L446.3 412.0L446.6 412.0L446.8 474.5L447.0 443.3L447.3 425.0L447.5 443.3L447.7 412.0L448.0 425.0L448.2 484.5L448.4 474.5L448.7 425.0L448.9 412.0" stroke="#0000ff" stroke-width="1" fill="none" stroke-linejoin="bevel" shape-rendering="crispEdges"/></g><path d="M69.0 9.5L69.0 484.5" stroke="#ff9999" stroke-width="2"/><path d="M108.0 9.5L108.0 484.5" stroke="#ff9999" stroke-width="2"/><path d="M449.0 9.5L449.0 484.5" stroke="#9999ff" stroke-width="2"/><path d="M59 84.5v8l5-4z" fill="#9999ff"/><path d="M70 84.5v8l5-4z" fill="#ff9999"/><path d="M107 84.5v8l-5-4z" fill="#ff9999"/><path d="M448 84.5v8l-5-4z" fill="#9999ff"/><path d="M59 243v8l5-4z" fill="#9999ff"/><path d="M70 243v8l5-4z" fill="#ff9999"/><path d="M107 243v8l-5-4z" fill="#ff9999"/><path d="M448 243v8l-5-4z" fill="#9999ff"/><path d="M59 401.5v8l5-4z" fill="#9999ff"/><path d="M70 401.5v8l5-4z" fill="#ff9999"/><path d="M107 401.5v8l-5-4z" fill="#ff9999"/><path d="M448 401.5v8l-5-4z" fill="#9999ff"/><rect x="58.5" y="9.5" width="392.0" height="475.0" fill="none" stroke="#000" shape-rendering="crispEdges"/><path d="M59.5 9.5L59.5 484.5" stroke="#a0a0ff" stroke-width="1"/><rect x="58.5" y="499.5" width="392.0" height="117" fill="none" stroke="#000" shape-rendering="crispEdges"/><path d="M58.5 557.7L450.5 557.7" stroke="#000" stroke-width="2"/><path d="M58.5 474.5L63.0 474.5" stroke="#000" stroke-width="1"/><path d="M58.5 370.5L63.0 370.5" stroke="#000" stroke-width="1"/><path d="M58.5 267.5L63.0 267.5" stroke="#000" stroke-width="1"/><path d="M58.5 163.5L63.0 163.5" stroke="#000" stroke-width="1"/><path d="M58.5 59.5L63.0 59.5" stroke="#000" stroke-width="1"/><path d="M58.5 610.5L63.0 610.5" stroke="#000" stroke-width="1"/><path d="M58.5 592.5L63.0 592.5" stroke="#000" stroke-width="1"/><path d="M58.5 575.5L63.0 575.5" stroke="#000" stroke-width="1"/><path d="M58.5 557.5L63.0 557.5" stroke="#000" stroke-width="1"/><path d="M58.5 540.5L63.0 540.5" stroke="#000" stroke-width="1"/><path d="M58.5 522.5L63.0 522.5" stroke="#000" stroke-width="1"/><path d="M58.5 505.5L63.0 505.5" stroke="#000" stroke-width="1"/><path d="M117.5 480.0L117.5 484.5" stroke="#000" stroke-width="1"/><path d="M117.5 612.0L117.5 616.5" stroke="#000" stroke-width="1"/><path d="M176.5 480.0L176.5 484.5" stroke="#000" stroke-width="1"/><path d="M176.5 612.0L176.5 616.5" stroke="#000" stroke-width="1"/><path d="M235.5 480.0L235.5 484.5" stroke="#000" stroke-width="1"/><path d="M235.5 612.0L235.5 616.5" stroke="#000" stroke-width="1"/><path d="M293.5 480.0L293.5 484.5" stroke="#000" stroke-width="1"/><path d="M293.5 612.0L293.5 616.5" stroke="#000" stroke-width="1"/><path d="M352.5 480.0L352.5 484.5" stroke="#000" stroke-width="1"/><path d="M352.5 612.0L352.5 616.5" stroke="#000" stroke-width="1"/><path d="M411.5 480.0L411.5 484.5" stroke="#000" stroke-width="1"/><path d="M411.5 612.0L411.5 616.5" stroke="#000" stroke-width="1"/></svg>
<span class="t" style="left:864px;top:655px;font-size:11px;line-height:13px;color:#000;transform:scaleX(0.9143);">10</span>
<span class="t" style="left:875.7px;top:653px;font-size:8px;line-height:9px;color:#000;transform:scaleX(0.8533);">0</span>
<span class="t" style="left:864px;top:551px;font-size:11px;line-height:13px;color:#000;transform:scaleX(0.9143);">10</span>
<span class="t" style="left:875.7px;top:549px;font-size:8px;line-height:9px;color:#000;transform:scaleX(0.8533);">1</span>
<span class="t" style="left:864px;top:448px;font-size:11px;line-height:13px;color:#000;transform:scaleX(0.9143);">10</span>
<span class="t" style="left:875.7px;top:446px;font-size:8px;line-height:9px;color:#000;transform:scaleX(0.8533);">2</span>
<span class="t" style="left:864px;top:344px;font-size:11px;line-height:13px;color:#000;transform:scaleX(0.9143);">10</span>
<span class="t" style="left:875.7px;top:342px;font-size:8px;line-height:9px;color:#000;transform:scaleX(0.8533);">3</span>
<span class="t" style="left:864px;top:240px;font-size:11px;line-height:13px;color:#000;transform:scaleX(0.9143);">10</span>
<span class="t" style="left:875.7px;top:238px;font-size:8px;line-height:9px;color:#000;transform:scaleX(0.8533);">4</span>
<span class="t" style="left:862.125px;top:686px;font-size:11px;line-height:13px;color:#000;">450</span>
<span class="t" style="left:862.125px;top:703px;font-size:11px;line-height:13px;color:#000;">300</span>
<span class="t" style="left:862.125px;top:721px;font-size:11px;line-height:13px;color:#000;">150</span>
<span class="t" style="left:874.375px;top:738px;font-size:11px;line-height:13px;color:#000;">0</span>
<span class="t" style="left:858.46875px;top:756px;font-size:11px;line-height:13px;color:#000;">-150</span>
<span class="t" style="left:858.46875px;top:773px;font-size:11px;line-height:13px;color:#000;">-300</span>
<span class="t" style="left:858.46875px;top:791px;font-size:11px;line-height:13px;color:#000;">-450</span>
<span class="t" style="left:877.14375px;top:808px;font-size:11px;line-height:13px;color:#000;">0.0</span>
<span class="t" style="left:935.9770833333333px;top:808px;font-size:11px;line-height:13px;color:#000;">7.5</span>
<span class="t" style="left:991.7479166666666px;top:808px;font-size:11px;line-height:13px;color:#000;">15.0</span>
<span class="t" style="left:1050.58125px;top:808px;font-size:11px;line-height:13px;color:#000;">22.5</span>
<span class="t" style="left:1109.4145833333332px;top:808px;font-size:11px;line-height:13px;color:#000;">30.0</span>
<span class="t" style="left:1168.2479166666665px;top:808px;font-size:11px;line-height:13px;color:#000;">37.5</span>
<span class="t" style="left:1227.08125px;top:808px;font-size:11px;line-height:13px;color:#000;">45.0</span>
<span class="t" style="left:1053.8px;top:825.3px;font-size:13px;line-height:15px;color:#000;transform:scaleX(0.9934);">time</span>
<span class="t" style="left:1080.2px;top:825.3px;font-size:13px;line-height:15px;color:#000;">[ns]</span>
<span class="t" style="left:832px;top:485.500px;font-size:12px;line-height:14px;transform:rotate(-90deg) scaleX(.962);transform-origin:0 0">Intensity  [Counts]</span>
<span class="t" style="left:832px;top:787.500px;font-size:12px;line-height:14px;transform:rotate(-90deg) scaleX(.95);transform-origin:0 0">Resids.  [1<span style="letter-spacing:.5px">0 </span><span style="font-size:10px;position:relative;top:-2.500px">-3</span>]</span>
<div class="" style="left:4px;top:852px;width:511px;height:1px;background:#fff"></div>
<div class="sunken1" style="left:4px;top:855px;width:200px;height:19px;"></div>
<div class="sunken1" style="left:206px;top:855px;width:733px;height:19px;"></div>
<div class="" style="left:941px;top:855px;width:347px;height:19px;box-shadow:inset 1px 1px 0 #808080,inset 0 -1px 0 #fff"></div>
<div class="" style="left:1287px;top:856px;width:1px;height:3px;background:#fff"></div>
<div class="" style="left:1274px;top:873px;width:14px;height:1px;background:#d4d0c8"></div>
<span class="t" style="left:944px;top:859px;font-size:11px;line-height:13px;color:#000;transform:scaleX(0.9782);">Analysis Mode</span>
<svg style="left:1275px;top:861px" width="13" height="13" viewBox="0 0 13 13"><path d="M12 1L1 12M12 5L5 12M12 9L9 12" stroke="#808080" stroke-width="1.500"/><path d="M13 1L2 12M13 5L6 12M13 9L10 12" stroke="#fff" stroke-width="1"/></svg>
</body></html>
